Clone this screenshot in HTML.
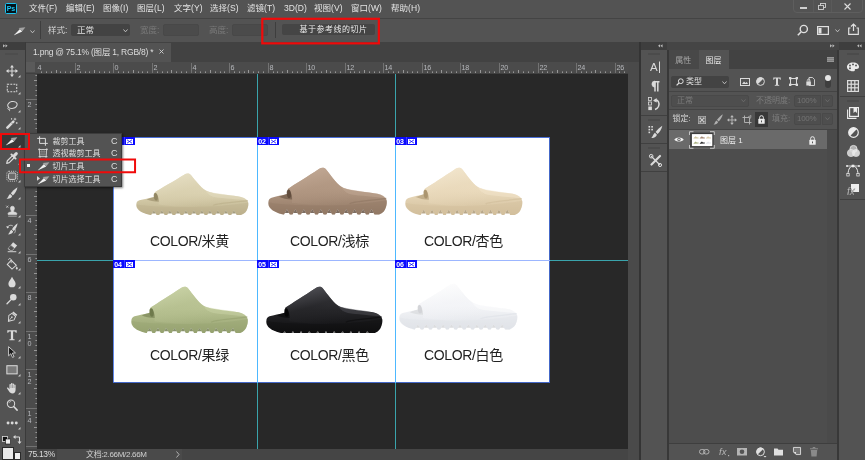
<!DOCTYPE html>
<html lang="zh-CN"><head><meta charset="utf-8"><title>Photoshop</title>
<style>
html,body{margin:0;padding:0}
body{width:865px;height:460px;overflow:hidden;position:relative;background:#535353;font-family:"Liberation Sans","Noto Sans CJK SC",sans-serif;font-size:9px;color:#dcdcdc}
body div,body svg{position:absolute;box-sizing:border-box}
svg{overflow:visible}
svg text{font-family:"Liberation Sans","Noto Sans CJK SC",sans-serif}
</style></head><body><div id="root" style="left:0;top:0;width:865px;height:460px;will-change:transform;">
<div style="left:0px;top:0px;width:865px;height:18px;background:#535353;"></div>
<div style="left:0px;top:18px;width:865px;height:1px;background:#444444;"></div>
<div style="left:5px;top:2.5px;width:11.5px;height:11px;background:#03141c;border:1px solid #1cc4f2;border-radius:1.5px;"></div>
<div style="left:5px;top:2.5px;height:11px;line-height:11px;font-size:7px;color:#1cc4f2;white-space:nowrap;width:11.5px;text-align:center;font-weight:bold;letter-spacing:-0.3px;">Ps</div>
<div style="left:29px;top:2px;height:13px;line-height:13px;font-size:8.5px;color:#e4e4e4;white-space:nowrap;letter-spacing:0.05px;">文件(F)</div>
<div style="left:66px;top:2px;height:13px;line-height:13px;font-size:8.5px;color:#e4e4e4;white-space:nowrap;letter-spacing:0.05px;">编辑(E)</div>
<div style="left:103px;top:2px;height:13px;line-height:13px;font-size:8.5px;color:#e4e4e4;white-space:nowrap;letter-spacing:0.05px;">图像(I)</div>
<div style="left:137px;top:2px;height:13px;line-height:13px;font-size:8.5px;color:#e4e4e4;white-space:nowrap;letter-spacing:0.05px;">图层(L)</div>
<div style="left:174px;top:2px;height:13px;line-height:13px;font-size:8.5px;color:#e4e4e4;white-space:nowrap;letter-spacing:0.05px;">文字(Y)</div>
<div style="left:210px;top:2px;height:13px;line-height:13px;font-size:8.5px;color:#e4e4e4;white-space:nowrap;letter-spacing:0.05px;">选择(S)</div>
<div style="left:247px;top:2px;height:13px;line-height:13px;font-size:8.5px;color:#e4e4e4;white-space:nowrap;letter-spacing:0.05px;">滤镜(T)</div>
<div style="left:284px;top:2px;height:13px;line-height:13px;font-size:8.5px;color:#e4e4e4;white-space:nowrap;letter-spacing:0.05px;">3D(D)</div>
<div style="left:314px;top:2px;height:13px;line-height:13px;font-size:8.5px;color:#e4e4e4;white-space:nowrap;letter-spacing:0.05px;">视图(V)</div>
<div style="left:351px;top:2px;height:13px;line-height:13px;font-size:8.5px;color:#e4e4e4;white-space:nowrap;letter-spacing:0.05px;">窗口(W)</div>
<div style="left:391px;top:2px;height:13px;line-height:13px;font-size:8.5px;color:#e4e4e4;white-space:nowrap;letter-spacing:0.05px;">帮助(H)</div>
<div style="left:793px;top:-1px;width:70px;height:13.5px;border:1px solid #5e5e5e;border-radius:0 0 4px 4px;"></div>
<div style="left:812.5px;top:0px;width:1px;height:11.5px;background:#5a5a5a;"></div>
<div style="left:831px;top:0px;width:1px;height:11.5px;background:#5a5a5a;"></div>
<div style="left:800px;top:7px;width:7px;height:2px;background:#cfcfcf;"></div>
<svg style="left:818px;top:3px;" width="8" height="7" viewBox="0 0 8 7"><rect x="2.5" y="0.5" width="5" height="4" fill="none" stroke="#cfcfcf" stroke-width="0.9"/><rect x="0.5" y="2.5" width="5" height="4" fill="#535353" stroke="#cfcfcf" stroke-width="0.9"/></svg>
<svg style="left:844px;top:2.5px;" width="7" height="7" viewBox="0 0 7 7"><path d="M0.5,0.5 L6.5,6.5 M6.5,0.5 L0.5,6.5" stroke="#dcdcdc" stroke-width="1.1"/></svg>
<div style="left:0px;top:19px;width:865px;height:22px;background:#535353;"></div>
<div style="left:0px;top:41px;width:865px;height:1px;background:#535353;"></div>
<svg style="left:13px;top:27px;" width="13" height="9" viewBox="0 0 13 9"><path d="M0.6,8.5 L7,2 L9.2,4.6 Z" fill="#f0f0f0"/><path d="M5.6,0.9 L12.4,0.3 L9.3,4.2 Z" fill="#a4a4a4"/></svg>
<svg style="left:30px;top:30px;" width="5" height="4" viewBox="0 0 5 4"><path d="M0.5,0.5 L2.5,2.8 L4.5,0.5" fill="none" stroke="#c8c8c8" stroke-width="0.9"/></svg>
<div style="left:40px;top:21px;width:1px;height:18px;background:#3e3e3e;"></div>
<div style="left:48px;top:23px;height:14px;line-height:14px;font-size:8.5px;color:#d6d6d6;white-space:nowrap;">样式:</div>
<div style="left:71px;top:24px;width:59px;height:12px;background:#434343;border-radius:2px;"></div>
<div style="left:77px;top:24px;height:12px;line-height:12px;font-size:8.5px;color:#e0e0e0;white-space:nowrap;">正常</div>
<svg style="left:123px;top:29px;" width="5" height="4" viewBox="0 0 5 4"><path d="M0.5,0.5 L2.5,2.8 L4.5,0.5" fill="none" stroke="#c8c8c8" stroke-width="0.9"/></svg>
<div style="left:140px;top:23px;height:14px;line-height:14px;font-size:8.5px;color:#7a7a7a;white-space:nowrap;">宽度:</div>
<div style="left:163px;top:24px;width:36px;height:12px;background:#4b4b4b;border:1px solid #484848;border-radius:2px;"></div>
<div style="left:209px;top:23px;height:14px;line-height:14px;font-size:8.5px;color:#7a7a7a;white-space:nowrap;">高度:</div>
<div style="left:232px;top:24px;width:36px;height:12px;background:#4b4b4b;border:1px solid #484848;border-radius:2px;"></div>
<div style="left:275px;top:22px;width:1px;height:16px;background:#3e3e3e;"></div>
<div style="left:282px;top:24px;width:93px;height:11px;background:#454545;border-radius:2px;"></div>
<div style="left:299.5px;top:24px;height:11px;line-height:11px;font-size:8px;color:#ececec;white-space:nowrap;letter-spacing:0.5px;">基于参考线的切片</div>
<svg style="left:797px;top:24px;" width="12" height="12" viewBox="0 0 12 12"><circle cx="6.8" cy="5" r="3.6" fill="none" stroke="#e0e0e0" stroke-width="1.4"/><path d="M4,8 L0.8,11.2" stroke="#e0e0e0" stroke-width="1.6"/></svg>
<svg style="left:817px;top:26px;" width="12" height="9" viewBox="0 0 12 9"><rect x="0.6" y="0.6" width="10.8" height="7.8" fill="none" stroke="#e0e0e0" stroke-width="1.2"/><rect x="1.5" y="2" width="3" height="5.5" fill="#e0e0e0"/></svg>
<svg style="left:835px;top:29px;" width="5" height="4" viewBox="0 0 5 4"><path d="M0.5,0.5 L2.5,2.8 L4.5,0.5" fill="none" stroke="#c8c8c8" stroke-width="0.9"/></svg>
<svg style="left:848px;top:23px;" width="11" height="12" viewBox="0 0 11 12"><path d="M2.5,5 H0.7 V11.3 H10.3 V5 H8.5" fill="none" stroke="#e0e0e0" stroke-width="1.2"/><path d="M5.5,8 V1.2 M3,3.5 L5.5,1 L8,3.5" fill="none" stroke="#e0e0e0" stroke-width="1.2"/></svg>
<div style="left:0px;top:42px;width:865px;height:20px;background:#424242;"></div>
<div style="left:0px;top:42px;width:25px;height:8px;background:#3e3e3e;"></div>
<svg style="left:2.5px;top:44.4px;" width="4.6" height="3.6" viewBox="0 0 5.5 4.4"><path d="M0,0.2 L2.5,2.2 L0,4.2 Z M3,0.2 L5.5,2.2 L3,4.2 Z" fill="#bdbdbd"/></svg>
<div style="left:26px;top:43px;width:145px;height:19px;background:#535353;"></div>
<div style="left:33px;top:46px;height:13px;line-height:13px;font-size:8.5px;color:#dedede;white-space:nowrap;letter-spacing:-0.22px;">1.png @ 75.1% (图层 1, RGB/8) *</div>
<svg style="left:159px;top:48.7px;" width="5" height="5" viewBox="0 0 5 5"><path d="M0.5,0.5 L4.5,4.5 M4.5,0.5 L0.5,4.5" stroke="#d0d0d0" stroke-width="0.9"/></svg>
<svg style="left:260px;top:16px;" width="122" height="30" viewBox="0 0 122 30"><rect x="2.3" y="2.8" width="116.55" height="24.55" fill="none" stroke="#f00a0a" stroke-width="2.2"/></svg>
<div style="left:0px;top:50px;width:25px;height:410px;background:#535353;"></div>
<div style="left:25px;top:42px;width:1px;height:418px;background:#3a3a3a;"></div>
<div style="left:5px;top:53px;width:13px;height:2px;background:#4d4d4d;"></div>
<div style="left:2px;top:135px;width:26px;height:14px;background:#383838;"></div>
<svg style="left:5.7px;top:64.7px;" width="12" height="12" viewBox="0 0 14 14"><path d="M7,1 V13 M1,7 H13" stroke="#dadada" stroke-width="1.2"/><path d="M7,0 L9.3,3 H4.7 Z M7,14 L9.3,11 H4.7 Z M0,7 L3,4.7 V9.3 Z M14,7 L11,4.7 V9.3 Z" fill="#dadada"/></svg>
<svg style="left:18px;top:75px;" width="2.5" height="2.5" viewBox="0 0 2.5 2.5"><path d="M2.5,0 V2.5 H0 Z" fill="#c8c8c8"/></svg>
<svg style="left:5.7px;top:81.7px;" width="12" height="12" viewBox="0 0 14 14"><rect x="1.5" y="2.5" width="11" height="9" fill="none" stroke="#dadada" stroke-width="1.2" stroke-dasharray="2.2 1.4"/></svg>
<svg style="left:18px;top:92px;" width="2.5" height="2.5" viewBox="0 0 2.5 2.5"><path d="M2.5,0 V2.5 H0 Z" fill="#c8c8c8"/></svg>
<svg style="left:5.7px;top:99.7px;" width="12" height="12" viewBox="0 0 14 14"><ellipse cx="7.5" cy="5.8" rx="5.6" ry="4" fill="none" stroke="#dadada" stroke-width="1.2" transform="rotate(-12 7.5 5.8)"/><path d="M3.2,8.5 C1.5,9.5 2,11.5 3.8,11 C5,10.6 4.5,12.5 3.5,13" fill="none" stroke="#dadada" stroke-width="1"/></svg>
<svg style="left:18px;top:110px;" width="2.5" height="2.5" viewBox="0 0 2.5 2.5"><path d="M2.5,0 V2.5 H0 Z" fill="#c8c8c8"/></svg>
<svg style="left:5.7px;top:116.7px;" width="12" height="12" viewBox="0 0 14 14"><path d="M1.6,12.4 L8.6,5.4" stroke="#dadada" stroke-width="3" stroke-linecap="round"/><path d="M6.2,6.6 L7.6,8" stroke="#535353" stroke-width="0.8"/><path d="M10.5,1 V4 M9,2.5 H12 M12.5,6 V8 M11.5,7 H13.5 M6.5,1.5 V3 M5.8,2.2 H7.2" stroke="#dadada" stroke-width="0.9"/></svg>
<svg style="left:18px;top:127px;" width="2.5" height="2.5" viewBox="0 0 2.5 2.5"><path d="M2.5,0 V2.5 H0 Z" fill="#c8c8c8"/></svg>
<svg style="left:5.7px;top:134.7px;" width="12" height="12" viewBox="0 0 14 14"></svg>
<svg style="left:18px;top:145px;" width="2.5" height="2.5" viewBox="0 0 2.5 2.5"><path d="M2.5,0 V2.5 H0 Z" fill="#c8c8c8"/></svg>
<svg style="left:5.7px;top:151.7px;" width="12" height="12" viewBox="0 0 14 14"><path d="M0.8,13.2 L1.6,10.2 L7.6,4.2 L9.8,6.4 L3.8,12.4 Z" fill="none" stroke="#dadada" stroke-width="1.4" stroke-linejoin="round"/><path d="M6.3,2.8 L11.2,7.7" stroke="#dadada" stroke-width="2.2" stroke-linecap="round"/><path d="M9.3,4.7 L12,2" stroke="#dadada" stroke-width="3.6" stroke-linecap="round"/></svg>
<svg style="left:18px;top:162px;" width="2.5" height="2.5" viewBox="0 0 2.5 2.5"><path d="M2.5,0 V2.5 H0 Z" fill="#c8c8c8"/></svg>
<svg style="left:5.7px;top:169.7px;" width="12" height="12" viewBox="0 0 14 14"><rect x="3" y="3.5" width="8.5" height="7.5" rx="1.6" fill="#6a6a6a" stroke="#dadada" stroke-width="1.1"/><rect x="1" y="1.5" width="12.5" height="11.5" rx="2.5" fill="none" stroke="#dadada" stroke-width="1" stroke-dasharray="1.2 1.2"/></svg>
<svg style="left:18px;top:180px;" width="2.5" height="2.5" viewBox="0 0 2.5 2.5"><path d="M2.5,0 V2.5 H0 Z" fill="#c8c8c8"/></svg>
<svg style="left:5.7px;top:186.7px;" width="12" height="12" viewBox="0 0 14 14"><path d="M13.4,0.3 C10,2.4 7,5.4 5.6,7.3 L8,9.8 C10.2,8 12.8,4 13.4,0.3 Z" fill="#dadada"/><path d="M4.8,8.1 L7.2,10.6 C6.6,13 3.5,14.2 0.6,13.6 C2.8,12.4 2.6,9.5 4.8,8.1 Z" fill="#dadada"/></svg>
<svg style="left:18px;top:197px;" width="2.5" height="2.5" viewBox="0 0 2.5 2.5"><path d="M2.5,0 V2.5 H0 Z" fill="#c8c8c8"/></svg>
<svg style="left:5.7px;top:204.7px;" width="12" height="12" viewBox="0 0 14 14"><path d="M2.5,13 H12.5 M2.5,11 H12.5 V9.5 C12.5,8.5 9,8.5 8.8,7.5 C8.6,6.5 9.8,5.5 9.8,3.8 A2.3,2.3 0 0 0 5.2,3.8 C5.2,5.5 6.4,6.5 6.2,7.5 C6,8.5 2.5,8.5 2.5,9.5 Z" fill="#dadada" stroke="#dadada" stroke-width="0.8"/><path d="M0.3,0.8 L2.7,3.2 M2.7,0.8 L0.3,3.2" stroke="#dadada" stroke-width="0.8"/></svg>
<svg style="left:18px;top:215px;" width="2.5" height="2.5" viewBox="0 0 2.5 2.5"><path d="M2.5,0 V2.5 H0 Z" fill="#c8c8c8"/></svg>
<svg style="left:5.7px;top:222.7px;" width="12" height="12" viewBox="0 0 14 14"><path d="M13.6,0.4 C11,2.4 8.6,5 7,7.2 L9,9.3 C11,7.5 13,4 13.6,0.4 Z" fill="#dadada"/><path d="M6.3,8 L8.3,10 C7.8,12.3 5,13.6 2.4,13.2 C4.3,12 4.2,9.4 6.3,8 Z" fill="#dadada"/><path d="M1.5,5.5 C2.5,2.5 6,2 8,3.5" fill="none" stroke="#dadada" stroke-width="1"/><path d="M0.3,3.5 L1.5,6.3 L3.8,4.6 Z" fill="#dadada"/><path d="M10.5,7 C11.3,9 10.8,10.8 9.5,12" fill="none" stroke="#dadada" stroke-width="0.8"/></svg>
<svg style="left:18px;top:233px;" width="2.5" height="2.5" viewBox="0 0 2.5 2.5"><path d="M2.5,0 V2.5 H0 Z" fill="#c8c8c8"/></svg>
<svg style="left:5.7px;top:240.7px;" width="12" height="12" viewBox="0 0 14 14"><path d="M8.3,1.5 L13,5.3 L7.8,11 H4.5 L2,9 Z" fill="#dadada"/><path d="M5.2,5 L9.8,8.8" stroke="#535353" stroke-width="0.9"/><path d="M2.6,8.6 L5,10.5 L7.6,10.5 L9.3,8.5 L5.5,5.4 Z" fill="#535353" stroke="#dadada" stroke-width="0.01"/><path d="M2,12.5 H12" stroke="#dadada" stroke-width="1.1"/></svg>
<svg style="left:18px;top:251px;" width="2.5" height="2.5" viewBox="0 0 2.5 2.5"><path d="M2.5,0 V2.5 H0 Z" fill="#c8c8c8"/></svg>
<svg style="left:5.7px;top:257.7px;" width="12" height="12" viewBox="0 0 14 14"><path d="M6,2.5 L12,8.5 L7,13 L1.5,7.5 Z" fill="none" stroke="#dadada" stroke-width="1.2"/><path d="M3,2 C3,0 6,0 6,2.5 V6" fill="none" stroke="#dadada" stroke-width="1"/><path d="M6,2.5 L12,8.5 H3 Z" fill="#dadada" opacity="0.0"/><path d="M12.6,9.5 C13.6,11 13.8,12 13.8,12.3 A1.2,1.2 0 0 1 11.4,12.3 C11.4,12 11.6,11 12.6,9.5 Z" fill="#dadada"/></svg>
<svg style="left:18px;top:268px;" width="2.5" height="2.5" viewBox="0 0 2.5 2.5"><path d="M2.5,0 V2.5 H0 Z" fill="#c8c8c8"/></svg>
<svg style="left:5.7px;top:275.7px;" width="12" height="12" viewBox="0 0 14 14"><path d="M7,0.8 C8.5,4 11.2,6.3 11.2,9 A4.2,4.2 0 0 1 2.8,9 C2.8,6.3 5.5,4 7,0.8 Z" fill="#dadada"/></svg>
<svg style="left:18px;top:286px;" width="2.5" height="2.5" viewBox="0 0 2.5 2.5"><path d="M2.5,0 V2.5 H0 Z" fill="#c8c8c8"/></svg>
<svg style="left:5.7px;top:292.7px;" width="12" height="12" viewBox="0 0 14 14"><circle cx="8.5" cy="5" r="3.8" fill="#dadada"/><path d="M5.6,8 L1.2,12.6" stroke="#dadada" stroke-width="1.6" stroke-linecap="round"/></svg>
<svg style="left:18px;top:303px;" width="2.5" height="2.5" viewBox="0 0 2.5 2.5"><path d="M2.5,0 V2.5 H0 Z" fill="#c8c8c8"/></svg>
<svg style="left:5.7px;top:310.7px;" width="12" height="12" viewBox="0 0 14 14"><g transform="rotate(40 7 7)"><path d="M4,1 H10 V3 H4 Z" fill="#dadada"/><path d="M4.2,3.8 H9.8 L11,8 L7,13.5 L3,8 Z" fill="none" stroke="#dadada" stroke-width="1.1"/><path d="M7,13 V8" stroke="#dadada" stroke-width="0.9"/><circle cx="7" cy="7.3" r="1" fill="#dadada"/></g></svg>
<svg style="left:18px;top:321px;" width="2.5" height="2.5" viewBox="0 0 2.5 2.5"><path d="M2.5,0 V2.5 H0 Z" fill="#c8c8c8"/></svg>
<svg style="left:5.7px;top:328.7px;" width="12" height="12" viewBox="0 0 14 14"><path d="M1.5,1.5 H12.5 V4.5 H11.3 C11.2,3.4 10.8,3 9.5,3 H8.3 V11 C8.3,11.8 8.8,12 10,12 V13 H4 V12 C5.2,12 5.7,11.8 5.7,11 V3 H4.5 C3.2,3 2.8,3.4 2.7,4.5 H1.5 Z" fill="#dadada"/></svg>
<svg style="left:18px;top:339px;" width="2.5" height="2.5" viewBox="0 0 2.5 2.5"><path d="M2.5,0 V2.5 H0 Z" fill="#c8c8c8"/></svg>
<svg style="left:5.7px;top:345.7px;" width="12" height="12" viewBox="0 0 14 14"><path d="M3,0.8 V11.5 L5.6,9 L7.6,13.3 L9.4,12.5 L7.4,8.3 L11,8 Z" fill="#1c1c1c" stroke="#dadada" stroke-width="1"/></svg>
<svg style="left:18px;top:356px;" width="2.5" height="2.5" viewBox="0 0 2.5 2.5"><path d="M2.5,0 V2.5 H0 Z" fill="#c8c8c8"/></svg>
<svg style="left:5.7px;top:363.7px;" width="12" height="12" viewBox="0 0 14 14"><rect x="1" y="2" width="12" height="9.5" fill="#7a7a7a" stroke="#dadada" stroke-width="1.2"/></svg>
<svg style="left:18px;top:374px;" width="2.5" height="2.5" viewBox="0 0 2.5 2.5"><path d="M2.5,0 V2.5 H0 Z" fill="#c8c8c8"/></svg>
<svg style="left:5.7px;top:381.7px;" width="12" height="12" viewBox="0 0 14 14"><path d="M4,8.5 V3.2 A0.9,0.9 0 0 1 5.8,3.2 V2 A0.9,0.9 0 0 1 7.6,2 V2.6 A0.9,0.9 0 0 1 9.4,2.6 V3.8 A0.9,0.9 0 0 1 11.2,3.8 V9 C11.2,11.5 9.8,13.3 7.5,13.3 C5.5,13.3 4.5,12.3 3.5,10.8 L1.3,7.6 C0.8,6.6 2,6 2.7,6.8 Z" fill="#dadada"/><path d="M5.8,3.2 V7 M7.6,2.6 V7 M9.4,3.8 V7" stroke="#535353" stroke-width="0.5"/></svg>
<svg style="left:18px;top:392px;" width="2.5" height="2.5" viewBox="0 0 2.5 2.5"><path d="M2.5,0 V2.5 H0 Z" fill="#c8c8c8"/></svg>
<svg style="left:5.7px;top:398.7px;" width="12" height="12" viewBox="0 0 14 14"><circle cx="5.8" cy="5.5" r="4.3" fill="none" stroke="#dadada" stroke-width="1.2"/><path d="M9,8.8 L13,13" stroke="#dadada" stroke-width="1.8" stroke-linecap="round"/><path d="M3.3,4.8 A2.8,2.8 0 0 1 6,2.8" fill="none" stroke="#dadada" stroke-width="0.7"/></svg>
<svg style="left:5.7px;top:416.7px;" width="12" height="12" viewBox="0 0 14 14"><circle cx="2.4" cy="7" r="1.7" fill="#dadada"/><circle cx="7.2" cy="7" r="1.7" fill="#dadada"/><circle cx="12" cy="7" r="1.7" fill="#dadada"/></svg>
<svg style="left:18px;top:427px;" width="2.5" height="2.5" viewBox="0 0 2.5 2.5"><path d="M2.5,0 V2.5 H0 Z" fill="#c8c8c8"/></svg>
<svg style="left:5px;top:137px;" width="13" height="9" viewBox="0 0 13 9"><path d="M0.6,8.5 L7,2 L9.2,4.6 Z" fill="#f0f0f0"/><path d="M5.6,0.9 L12.4,0.3 L9.3,4.2 Z" fill="#a4a4a4"/></svg>
<svg style="left:2px;top:436px;" width="9" height="8" viewBox="0 0 9 8"><rect x="0.5" y="0.5" width="5" height="5" fill="#111" stroke="#ddd" stroke-width="0.8"/><rect x="3.5" y="3" width="5" height="5" fill="#eee" stroke="#111" stroke-width="0.6"/></svg>
<svg style="left:13px;top:435px;" width="9" height="9" viewBox="0 0 9 9"><path d="M2,2 H6.5 V7" fill="none" stroke="#dadada" stroke-width="1"/><path d="M0,2 L2.5,0 V4 Z M6.5,9 L4.5,6.5 H8.5 Z" fill="#dadada"/></svg>
<div style="left:14px;top:452px;width:7px;height:8px;background:#f0f0f0;border:1px solid #2a2a2a;"></div>
<div style="left:2px;top:447px;width:12px;height:13px;background:#eaeaea;border:1px solid #2a2a2a;"></div>
<div style="left:26px;top:62px;width:602px;height:12px;background:#4b4b4b;"></div>
<div style="left:26px;top:74px;width:11px;height:375px;background:#4b4b4b;"></div>
<div style="left:26px;top:62px;width:9px;height:10px;background:#5a5a5a;"></div>
<div style="left:26px;top:73px;width:602px;height:1px;background:#404040;"></div>
<svg style="left:37px;top:62px;overflow:hidden;" width="591" height="11" viewBox="0 0 591 11"><text x="0.6" y="7.6" font-size="7.2" letter-spacing="-0.3" fill="#b6b8bc">4</text><text x="39.6" y="7.6" font-size="7.2" letter-spacing="-0.3" fill="#b6b8bc">2</text><text x="77.6" y="7.6" font-size="7.2" letter-spacing="-0.3" fill="#b6b8bc">0</text><text x="116.6" y="7.6" font-size="7.2" letter-spacing="-0.3" fill="#b6b8bc">2</text><text x="155.6" y="7.6" font-size="7.2" letter-spacing="-0.3" fill="#b6b8bc">4</text><text x="193.6" y="7.6" font-size="7.2" letter-spacing="-0.3" fill="#b6b8bc">6</text><text x="232.6" y="7.6" font-size="7.2" letter-spacing="-0.3" fill="#b6b8bc">8</text><text x="270.6" y="7.6" font-size="7.2" letter-spacing="-0.3" fill="#b6b8bc">10</text><text x="309.6" y="7.6" font-size="7.2" letter-spacing="-0.3" fill="#b6b8bc">12</text><text x="347.6" y="7.6" font-size="7.2" letter-spacing="-0.3" fill="#b6b8bc">14</text><text x="386.6" y="7.6" font-size="7.2" letter-spacing="-0.3" fill="#b6b8bc">16</text><text x="424.6" y="7.6" font-size="7.2" letter-spacing="-0.3" fill="#b6b8bc">18</text><text x="463.6" y="7.6" font-size="7.2" letter-spacing="-0.3" fill="#b6b8bc">20</text><text x="502.6" y="7.6" font-size="7.2" letter-spacing="-0.3" fill="#b6b8bc">22</text><text x="540.6" y="7.6" font-size="7.2" letter-spacing="-0.3" fill="#b6b8bc">24</text><text x="579.6" y="7.6" font-size="7.2" letter-spacing="-0.3" fill="#b6b8bc">26</text><path d="M38.5,1 V11 M76.5,1 V11 M115.5,1 V11 M154.5,1 V11 M192.5,1 V11 M231.5,1 V11 M269.5,1 V11 M308.5,1 V11 M346.5,1 V11 M385.5,1 V11 M423.5,1 V11 M462.5,1 V11 M501.5,1 V11 M539.5,1 V11 M578.5,1 V11 " stroke="#727272" stroke-width="1" fill="none"/><path d="M19.5,8 V11 M57.5,8 V11 M96.5,8 V11 M134.5,8 V11 M173.5,8 V11 M211.5,8 V11 M250.5,8 V11 M289.5,8 V11 M327.5,8 V11 M366.5,8 V11 M404.5,8 V11 M443.5,8 V11 M481.5,8 V11 M520.5,8 V11 M558.5,8 V11 " stroke="#969696" stroke-width="1" fill="none"/><path d="M4.5,9.4 V11 M9.5,9.4 V11 M14.5,9.4 V11 M23.5,9.4 V11 M28.5,9.4 V11 M33.5,9.4 V11 M43.5,9.4 V11 M48.5,9.4 V11 M52.5,9.4 V11 M62.5,9.4 V11 M67.5,9.4 V11 M72.5,9.4 V11 M81.5,9.4 V11 M86.5,9.4 V11 M91.5,9.4 V11 M101.5,9.4 V11 M105.5,9.4 V11 M110.5,9.4 V11 M120.5,9.4 V11 M125.5,9.4 V11 M130.5,9.4 V11 M139.5,9.4 V11 M144.5,9.4 V11 M149.5,9.4 V11 M158.5,9.4 V11 M163.5,9.4 V11 M168.5,9.4 V11 M178.5,9.4 V11 M183.5,9.4 V11 M187.5,9.4 V11 M197.5,9.4 V11 M202.5,9.4 V11 M207.5,9.4 V11 M216.5,9.4 V11 M221.5,9.4 V11 M226.5,9.4 V11 M236.5,9.4 V11 M240.5,9.4 V11 M245.5,9.4 V11 M255.5,9.4 V11 M260.5,9.4 V11 M264.5,9.4 V11 M274.5,9.4 V11 M279.5,9.4 V11 M284.5,9.4 V11 M293.5,9.4 V11 M298.5,9.4 V11 M303.5,9.4 V11 M313.5,9.4 V11 M317.5,9.4 V11 M322.5,9.4 V11 M332.5,9.4 V11 M337.5,9.4 V11 M342.5,9.4 V11 M351.5,9.4 V11 M356.5,9.4 V11 M361.5,9.4 V11 M370.5,9.4 V11 M375.5,9.4 V11 M380.5,9.4 V11 M390.5,9.4 V11 M395.5,9.4 V11 M399.5,9.4 V11 M409.5,9.4 V11 M414.5,9.4 V11 M419.5,9.4 V11 M428.5,9.4 V11 M433.5,9.4 V11 M438.5,9.4 V11 M448.5,9.4 V11 M452.5,9.4 V11 M457.5,9.4 V11 M467.5,9.4 V11 M472.5,9.4 V11 M476.5,9.4 V11 M486.5,9.4 V11 M491.5,9.4 V11 M496.5,9.4 V11 M505.5,9.4 V11 M510.5,9.4 V11 M515.5,9.4 V11 M525.5,9.4 V11 M529.5,9.4 V11 M534.5,9.4 V11 M544.5,9.4 V11 M549.5,9.4 V11 M554.5,9.4 V11 M563.5,9.4 V11 M568.5,9.4 V11 M573.5,9.4 V11 M582.5,9.4 V11 M587.5,9.4 V11 " stroke="#969696" stroke-width="1" fill="none"/></svg>
<svg style="left:26px;top:74px;overflow:hidden;" width="11" height="375" viewBox="0 0 11 375"><text x="1.6" y="33.2" font-size="7.2" fill="#b6b8bc">2</text><text x="1.6" y="72.2" font-size="7.2" fill="#b6b8bc">0</text><text x="1.6" y="110.2" font-size="7.2" fill="#b6b8bc">2</text><text x="1.6" y="149.2" font-size="7.2" fill="#b6b8bc">4</text><text x="1.6" y="188.2" font-size="7.2" fill="#b6b8bc">6</text><text x="1.6" y="226.2" font-size="7.2" fill="#b6b8bc">8</text><text x="1.6" y="265.2" font-size="7.2" fill="#b6b8bc">1</text><text x="1.6" y="271.8" font-size="7.2" fill="#b6b8bc">0</text><text x="1.6" y="303.2" font-size="7.2" fill="#b6b8bc">1</text><text x="1.6" y="309.8" font-size="7.2" fill="#b6b8bc">2</text><text x="1.6" y="342.2" font-size="7.2" fill="#b6b8bc">1</text><text x="1.6" y="348.8" font-size="7.2" fill="#b6b8bc">4</text><text x="1.6" y="380.2" font-size="7.2" fill="#b6b8bc">1</text><text x="1.6" y="386.8" font-size="7.2" fill="#b6b8bc">6</text><path d="M0,25.5 H11 M0,64.5 H11 M0,102.5 H11 M0,141.5 H11 M0,180.5 H11 M0,218.5 H11 M0,257.5 H11 M0,295.5 H11 M0,334.5 H11 M0,372.5 H11 " stroke="#727272" stroke-width="1" fill="none"/><path d="M8,6.5 H11 M8,45.5 H11 M8,83.5 H11 M8,122.5 H11 M8,160.5 H11 M8,199.5 H11 M8,237.5 H11 M8,276.5 H11 M8,314.5 H11 M8,353.5 H11 " stroke="#969696" stroke-width="1" fill="none"/><path d="M9.4,1.5 H11 M9.4,11.5 H11 M9.4,16.5 H11 M9.4,21.5 H11 M9.4,30.5 H11 M9.4,35.5 H11 M9.4,40.5 H11 M9.4,49.5 H11 M9.4,54.5 H11 M9.4,59.5 H11 M9.4,69.5 H11 M9.4,74.5 H11 M9.4,78.5 H11 M9.4,88.5 H11 M9.4,93.5 H11 M9.4,98.5 H11 M9.4,107.5 H11 M9.4,112.5 H11 M9.4,117.5 H11 M9.4,127.5 H11 M9.4,131.5 H11 M9.4,136.5 H11 M9.4,146.5 H11 M9.4,151.5 H11 M9.4,155.5 H11 M9.4,165.5 H11 M9.4,170.5 H11 M9.4,175.5 H11 M9.4,184.5 H11 M9.4,189.5 H11 M9.4,194.5 H11 M9.4,204.5 H11 M9.4,208.5 H11 M9.4,213.5 H11 M9.4,223.5 H11 M9.4,228.5 H11 M9.4,233.5 H11 M9.4,242.5 H11 M9.4,247.5 H11 M9.4,252.5 H11 M9.4,261.5 H11 M9.4,266.5 H11 M9.4,271.5 H11 M9.4,281.5 H11 M9.4,286.5 H11 M9.4,290.5 H11 M9.4,300.5 H11 M9.4,305.5 H11 M9.4,310.5 H11 M9.4,319.5 H11 M9.4,324.5 H11 M9.4,329.5 H11 M9.4,339.5 H11 M9.4,343.5 H11 M9.4,348.5 H11 M9.4,358.5 H11 M9.4,363.5 H11 M9.4,367.5 H11 " stroke="#969696" stroke-width="1" fill="none"/></svg>
<div style="left:37px;top:74px;width:591px;height:375px;background:#282828;"></div>
<div style="left:628px;top:62px;width:11px;height:398px;background:#4a4a4a;"></div>
<div style="left:639px;top:42px;width:2px;height:418px;background:#343434;"></div>
<div style="left:26px;top:449px;width:602px;height:11px;background:#4a4a4a;"></div>
<div style="left:26px;top:449px;width:31px;height:11px;background:#434343;"></div>
<div style="left:28px;top:449px;height:11px;line-height:11px;font-size:8.5px;color:#dcdcdc;white-space:nowrap;letter-spacing:-0.3px;">75.13%</div>
<div style="left:86px;top:449px;height:11px;line-height:11px;font-size:8px;color:#d0d0d0;white-space:nowrap;letter-spacing:-0.3px;">文档:2.66M/2.66M</div>
<svg style="left:176px;top:451px;" width="4" height="7" viewBox="0 0 4 7"><path d="M0.5,0.5 L3,3.5 L0.5,6.5" fill="none" stroke="#bdbdbd" stroke-width="0.9"/></svg>
<div style="left:182px;top:449px;width:446px;height:11px;background:#454545;"></div>
<div style="left:113px;top:137px;width:437px;height:246px;background:#ffffff;"></div>
<svg style="left:135.5px;top:173px;filter:blur(0.35px);" width="113" height="42.5" viewBox="0 0 120 48.4" preserveAspectRatio="none"><defs><linearGradient id="g0" x1="0" y1="0" x2="0" y2="1"><stop offset="0" stop-color="#e7e0c6"/><stop offset="0.5" stop-color="#d9d0af"/><stop offset="1" stop-color="#bcb08b"/></linearGradient><linearGradient id="s0" x1="0.25" y1="0" x2="0.75" y2="1"><stop offset="0" stop-color="#e7e0c6" stop-opacity="0.95"/><stop offset="0.5" stop-color="#d9d0af" stop-opacity="0.6"/><stop offset="1" stop-color="#d9d0af" stop-opacity="0"/></linearGradient></defs><path d="M0.4,36 C0.3,33.4 1.3,31.6 3.6,30.9 C8,29.7 14,28.4 19.2,27.2 L20,22 C26,18 40,9.5 51.5,1.8 C53.5,0.3 56.5,0.3 58,2 C61,5.5 66,13 71.7,18.3 C75,21 78,22 82,22.8 C90,24.2 100,25.3 108,26.5 C113,27.3 117,29 118.8,32.5 C119.6,34.5 119.4,38 118.3,40.8 C117.3,44 115.5,46.4 111.5,47.8 L15.5,47.8 C10,46.8 2.6,44 0.7,39 C0.5,38 0.4,37 0.4,36 Z" fill="url(#g0)"/><path d="M0.5,35.5 C6,37.5 40,39.5 70,38.5 C90,37.8 108,35.5 119.3,33.5 C119.6,36 119.2,39 118.3,40.8 C117.3,44 115.5,46.4 111.5,47.8 L15.5,47.8 C11,46.6 4,43.6 0.8,38.3 C0.4,37.3 0.4,36.3 0.5,35.5 Z" fill="#bcb08b" opacity="0.4"/><path d="M15.7,48.6 L18.5,43.2 Q19.0,42.4 19.5,43.2 L22.3,48.6 Z M24.2,48.6 L27.0,43.2 Q27.5,42.4 28.0,43.2 L30.8,48.6 Z M32.7,48.6 L35.5,43.2 Q36.0,42.4 36.5,43.2 L39.3,48.6 Z M41.2,48.6 L44.0,43.2 Q44.5,42.4 45.0,43.2 L47.8,48.6 Z M49.7,48.6 L52.5,43.2 Q53.0,42.4 53.5,43.2 L56.3,48.6 Z M58.2,48.6 L61.0,43.2 Q61.5,42.4 62.0,43.2 L64.8,48.6 Z M66.7,48.6 L69.5,43.2 Q70.0,42.4 70.5,43.2 L73.3,48.6 Z M75.2,48.6 L78.0,43.2 Q78.5,42.4 79.0,43.2 L81.8,48.6 Z M83.7,48.6 L86.5,43.2 Q87.0,42.4 87.5,43.2 L90.3,48.6 Z M92.2,48.6 L95.0,43.2 Q95.5,42.4 96.0,43.2 L98.8,48.6 Z M100.7,48.6 L103.5,43.2 Q104.0,42.4 104.5,43.2 L107.3,48.6 Z " fill="#ffffff"/><path d="M16.9,46.2 L18.5,43.2 Q19.0,42.4 19.5,43.2 L21.1,46.2 Z M25.4,46.2 L27.0,43.2 Q27.5,42.4 28.0,43.2 L29.6,46.2 Z M33.9,46.2 L35.5,43.2 Q36.0,42.4 36.5,43.2 L38.1,46.2 Z M42.4,46.2 L44.0,43.2 Q44.5,42.4 45.0,43.2 L46.6,46.2 Z M50.9,46.2 L52.5,43.2 Q53.0,42.4 53.5,43.2 L55.1,46.2 Z M59.4,46.2 L61.0,43.2 Q61.5,42.4 62.0,43.2 L63.6,46.2 Z M67.9,46.2 L69.5,43.2 Q70.0,42.4 70.5,43.2 L72.1,46.2 Z M76.4,46.2 L78.0,43.2 Q78.5,42.4 79.0,43.2 L80.6,46.2 Z M84.9,46.2 L86.5,43.2 Q87.0,42.4 87.5,43.2 L89.1,46.2 Z M93.4,46.2 L95.0,43.2 Q95.5,42.4 96.0,43.2 L97.6,46.2 Z M101.9,46.2 L103.5,43.2 Q104.0,42.4 104.5,43.2 L106.1,46.2 Z " fill="#8f845f" opacity="0.8"/><path d="M20,22 C26,18 40,9.5 51.5,1.8 C53.5,0.3 56.5,0.3 58,2 C61,5.5 66,13 71.7,18.3 C75,21 78,22 82,22.8 C84,28 82,34 78,38 C60,39 40,38.5 24,36 C25,31 23,25.5 20,22 Z" fill="url(#s0)"/><path d="M11,30 C14,28.7 17,27.8 19.2,27.2 L20,22.4 C23,24.4 24.6,28.4 24.2,32.6 C19,32.6 14.5,31.6 11,30 Z" fill="#8f845f" opacity="0.55"/><ellipse cx="21" cy="27" rx="2.1" ry="4.3" transform="rotate(-8 21 27)" fill="#8f845f" opacity="0.9"/><path d="M74,20.5 C80,22.6 96,24.4 108,26.4 C113,27.2 116.5,28.6 118.3,31.2 C108,30 92,28.8 84,27.6 C80,26.8 76.5,24.5 74,20.5 Z" fill="#e7e0c6" opacity="0.45"/><path d="M82,37 C84,34.5 100,34 118.8,31.5" fill="none" stroke="#bcb08b" stroke-width="1.3" opacity="0.7"/></svg>
<svg style="left:267.5px;top:167.3px;filter:blur(0.35px);" width="119.5" height="48.2" viewBox="0 0 120 48.4" preserveAspectRatio="none"><defs><linearGradient id="g1" x1="0" y1="0" x2="0" y2="1"><stop offset="0" stop-color="#c3aa96"/><stop offset="0.5" stop-color="#b09681"/><stop offset="1" stop-color="#927965"/></linearGradient><linearGradient id="s1" x1="0.25" y1="0" x2="0.75" y2="1"><stop offset="0" stop-color="#c3aa96" stop-opacity="0.95"/><stop offset="0.5" stop-color="#b09681" stop-opacity="0.6"/><stop offset="1" stop-color="#b09681" stop-opacity="0"/></linearGradient></defs><path d="M0.4,36 C0.3,33.4 1.3,31.6 3.6,30.9 C8,29.7 14,28.4 19.2,27.2 L20,22 C26,18 40,9.5 51.5,1.8 C53.5,0.3 56.5,0.3 58,2 C61,5.5 66,13 71.7,18.3 C75,21 78,22 82,22.8 C90,24.2 100,25.3 108,26.5 C113,27.3 117,29 118.8,32.5 C119.6,34.5 119.4,38 118.3,40.8 C117.3,44 115.5,46.4 111.5,47.8 L15.5,47.8 C10,46.8 2.6,44 0.7,39 C0.5,38 0.4,37 0.4,36 Z" fill="url(#g1)"/><path d="M0.5,35.5 C6,37.5 40,39.5 70,38.5 C90,37.8 108,35.5 119.3,33.5 C119.6,36 119.2,39 118.3,40.8 C117.3,44 115.5,46.4 111.5,47.8 L15.5,47.8 C11,46.6 4,43.6 0.8,38.3 C0.4,37.3 0.4,36.3 0.5,35.5 Z" fill="#927965" opacity="0.4"/><path d="M15.7,48.6 L18.5,43.2 Q19.0,42.4 19.5,43.2 L22.3,48.6 Z M24.2,48.6 L27.0,43.2 Q27.5,42.4 28.0,43.2 L30.8,48.6 Z M32.7,48.6 L35.5,43.2 Q36.0,42.4 36.5,43.2 L39.3,48.6 Z M41.2,48.6 L44.0,43.2 Q44.5,42.4 45.0,43.2 L47.8,48.6 Z M49.7,48.6 L52.5,43.2 Q53.0,42.4 53.5,43.2 L56.3,48.6 Z M58.2,48.6 L61.0,43.2 Q61.5,42.4 62.0,43.2 L64.8,48.6 Z M66.7,48.6 L69.5,43.2 Q70.0,42.4 70.5,43.2 L73.3,48.6 Z M75.2,48.6 L78.0,43.2 Q78.5,42.4 79.0,43.2 L81.8,48.6 Z M83.7,48.6 L86.5,43.2 Q87.0,42.4 87.5,43.2 L90.3,48.6 Z M92.2,48.6 L95.0,43.2 Q95.5,42.4 96.0,43.2 L98.8,48.6 Z M100.7,48.6 L103.5,43.2 Q104.0,42.4 104.5,43.2 L107.3,48.6 Z " fill="#ffffff"/><path d="M16.9,46.2 L18.5,43.2 Q19.0,42.4 19.5,43.2 L21.1,46.2 Z M25.4,46.2 L27.0,43.2 Q27.5,42.4 28.0,43.2 L29.6,46.2 Z M33.9,46.2 L35.5,43.2 Q36.0,42.4 36.5,43.2 L38.1,46.2 Z M42.4,46.2 L44.0,43.2 Q44.5,42.4 45.0,43.2 L46.6,46.2 Z M50.9,46.2 L52.5,43.2 Q53.0,42.4 53.5,43.2 L55.1,46.2 Z M59.4,46.2 L61.0,43.2 Q61.5,42.4 62.0,43.2 L63.6,46.2 Z M67.9,46.2 L69.5,43.2 Q70.0,42.4 70.5,43.2 L72.1,46.2 Z M76.4,46.2 L78.0,43.2 Q78.5,42.4 79.0,43.2 L80.6,46.2 Z M84.9,46.2 L86.5,43.2 Q87.0,42.4 87.5,43.2 L89.1,46.2 Z M93.4,46.2 L95.0,43.2 Q95.5,42.4 96.0,43.2 L97.6,46.2 Z M101.9,46.2 L103.5,43.2 Q104.0,42.4 104.5,43.2 L106.1,46.2 Z " fill="#5e4a3b" opacity="0.8"/><path d="M20,22 C26,18 40,9.5 51.5,1.8 C53.5,0.3 56.5,0.3 58,2 C61,5.5 66,13 71.7,18.3 C75,21 78,22 82,22.8 C84,28 82,34 78,38 C60,39 40,38.5 24,36 C25,31 23,25.5 20,22 Z" fill="url(#s1)"/><path d="M11,30 C14,28.7 17,27.8 19.2,27.2 L20,22.4 C23,24.4 24.6,28.4 24.2,32.6 C19,32.6 14.5,31.6 11,30 Z" fill="#5e4a3b" opacity="0.55"/><ellipse cx="21" cy="27" rx="2.1" ry="4.3" transform="rotate(-8 21 27)" fill="#5e4a3b" opacity="0.9"/><path d="M74,20.5 C80,22.6 96,24.4 108,26.4 C113,27.2 116.5,28.6 118.3,31.2 C108,30 92,28.8 84,27.6 C80,26.8 76.5,24.5 74,20.5 Z" fill="#c3aa96" opacity="0.45"/><path d="M82,37 C84,34.5 100,34 118.8,31.5" fill="none" stroke="#927965" stroke-width="1.3" opacity="0.7"/></svg>
<svg style="left:404.5px;top:167px;filter:blur(0.35px);" width="118" height="48.6" viewBox="0 0 120 48.4" preserveAspectRatio="none"><defs><linearGradient id="g2" x1="0" y1="0" x2="0" y2="1"><stop offset="0" stop-color="#f3e7cf"/><stop offset="0.5" stop-color="#e9d9bb"/><stop offset="1" stop-color="#d2bf9c"/></linearGradient><linearGradient id="s2" x1="0.25" y1="0" x2="0.75" y2="1"><stop offset="0" stop-color="#f3e7cf" stop-opacity="0.95"/><stop offset="0.5" stop-color="#e9d9bb" stop-opacity="0.6"/><stop offset="1" stop-color="#e9d9bb" stop-opacity="0"/></linearGradient></defs><path d="M0.4,36 C0.3,33.4 1.3,31.6 3.6,30.9 C8,29.7 14,28.4 19.2,27.2 L20,22 C26,18 40,9.5 51.5,1.8 C53.5,0.3 56.5,0.3 58,2 C61,5.5 66,13 71.7,18.3 C75,21 78,22 82,22.8 C90,24.2 100,25.3 108,26.5 C113,27.3 117,29 118.8,32.5 C119.6,34.5 119.4,38 118.3,40.8 C117.3,44 115.5,46.4 111.5,47.8 L15.5,47.8 C10,46.8 2.6,44 0.7,39 C0.5,38 0.4,37 0.4,36 Z" fill="url(#g2)"/><path d="M0.5,35.5 C6,37.5 40,39.5 70,38.5 C90,37.8 108,35.5 119.3,33.5 C119.6,36 119.2,39 118.3,40.8 C117.3,44 115.5,46.4 111.5,47.8 L15.5,47.8 C11,46.6 4,43.6 0.8,38.3 C0.4,37.3 0.4,36.3 0.5,35.5 Z" fill="#d2bf9c" opacity="0.4"/><path d="M15.7,48.6 L18.5,43.2 Q19.0,42.4 19.5,43.2 L22.3,48.6 Z M24.2,48.6 L27.0,43.2 Q27.5,42.4 28.0,43.2 L30.8,48.6 Z M32.7,48.6 L35.5,43.2 Q36.0,42.4 36.5,43.2 L39.3,48.6 Z M41.2,48.6 L44.0,43.2 Q44.5,42.4 45.0,43.2 L47.8,48.6 Z M49.7,48.6 L52.5,43.2 Q53.0,42.4 53.5,43.2 L56.3,48.6 Z M58.2,48.6 L61.0,43.2 Q61.5,42.4 62.0,43.2 L64.8,48.6 Z M66.7,48.6 L69.5,43.2 Q70.0,42.4 70.5,43.2 L73.3,48.6 Z M75.2,48.6 L78.0,43.2 Q78.5,42.4 79.0,43.2 L81.8,48.6 Z M83.7,48.6 L86.5,43.2 Q87.0,42.4 87.5,43.2 L90.3,48.6 Z M92.2,48.6 L95.0,43.2 Q95.5,42.4 96.0,43.2 L98.8,48.6 Z M100.7,48.6 L103.5,43.2 Q104.0,42.4 104.5,43.2 L107.3,48.6 Z " fill="#ffffff"/><path d="M16.9,46.2 L18.5,43.2 Q19.0,42.4 19.5,43.2 L21.1,46.2 Z M25.4,46.2 L27.0,43.2 Q27.5,42.4 28.0,43.2 L29.6,46.2 Z M33.9,46.2 L35.5,43.2 Q36.0,42.4 36.5,43.2 L38.1,46.2 Z M42.4,46.2 L44.0,43.2 Q44.5,42.4 45.0,43.2 L46.6,46.2 Z M50.9,46.2 L52.5,43.2 Q53.0,42.4 53.5,43.2 L55.1,46.2 Z M59.4,46.2 L61.0,43.2 Q61.5,42.4 62.0,43.2 L63.6,46.2 Z M67.9,46.2 L69.5,43.2 Q70.0,42.4 70.5,43.2 L72.1,46.2 Z M76.4,46.2 L78.0,43.2 Q78.5,42.4 79.0,43.2 L80.6,46.2 Z M84.9,46.2 L86.5,43.2 Q87.0,42.4 87.5,43.2 L89.1,46.2 Z M93.4,46.2 L95.0,43.2 Q95.5,42.4 96.0,43.2 L97.6,46.2 Z M101.9,46.2 L103.5,43.2 Q104.0,42.4 104.5,43.2 L106.1,46.2 Z " fill="#a8926c" opacity="0.8"/><path d="M20,22 C26,18 40,9.5 51.5,1.8 C53.5,0.3 56.5,0.3 58,2 C61,5.5 66,13 71.7,18.3 C75,21 78,22 82,22.8 C84,28 82,34 78,38 C60,39 40,38.5 24,36 C25,31 23,25.5 20,22 Z" fill="url(#s2)"/><path d="M11,30 C14,28.7 17,27.8 19.2,27.2 L20,22.4 C23,24.4 24.6,28.4 24.2,32.6 C19,32.6 14.5,31.6 11,30 Z" fill="#a8926c" opacity="0.55"/><ellipse cx="21" cy="27" rx="2.1" ry="4.3" transform="rotate(-8 21 27)" fill="#a8926c" opacity="0.9"/><path d="M74,20.5 C80,22.6 96,24.4 108,26.4 C113,27.2 116.5,28.6 118.3,31.2 C108,30 92,28.8 84,27.6 C80,26.8 76.5,24.5 74,20.5 Z" fill="#f3e7cf" opacity="0.45"/><path d="M82,37 C84,34.5 100,34 118.8,31.5" fill="none" stroke="#d2bf9c" stroke-width="1.3" opacity="0.7"/></svg>
<svg style="left:131px;top:285.7px;filter:blur(0.35px);" width="117.5" height="47.5" viewBox="0 0 120 48.4" preserveAspectRatio="none"><defs><linearGradient id="g3" x1="0" y1="0" x2="0" y2="1"><stop offset="0" stop-color="#cbd4a8"/><stop offset="0.5" stop-color="#b6c090"/><stop offset="1" stop-color="#97a371"/></linearGradient><linearGradient id="s3" x1="0.25" y1="0" x2="0.75" y2="1"><stop offset="0" stop-color="#cbd4a8" stop-opacity="0.95"/><stop offset="0.5" stop-color="#b6c090" stop-opacity="0.6"/><stop offset="1" stop-color="#b6c090" stop-opacity="0"/></linearGradient></defs><path d="M0.4,36 C0.3,33.4 1.3,31.6 3.6,30.9 C8,29.7 14,28.4 19.2,27.2 L20,22 C26,18 40,9.5 51.5,1.8 C53.5,0.3 56.5,0.3 58,2 C61,5.5 66,13 71.7,18.3 C75,21 78,22 82,22.8 C90,24.2 100,25.3 108,26.5 C113,27.3 117,29 118.8,32.5 C119.6,34.5 119.4,38 118.3,40.8 C117.3,44 115.5,46.4 111.5,47.8 L15.5,47.8 C10,46.8 2.6,44 0.7,39 C0.5,38 0.4,37 0.4,36 Z" fill="url(#g3)"/><path d="M0.5,35.5 C6,37.5 40,39.5 70,38.5 C90,37.8 108,35.5 119.3,33.5 C119.6,36 119.2,39 118.3,40.8 C117.3,44 115.5,46.4 111.5,47.8 L15.5,47.8 C11,46.6 4,43.6 0.8,38.3 C0.4,37.3 0.4,36.3 0.5,35.5 Z" fill="#97a371" opacity="0.4"/><path d="M15.7,48.6 L18.5,43.2 Q19.0,42.4 19.5,43.2 L22.3,48.6 Z M24.2,48.6 L27.0,43.2 Q27.5,42.4 28.0,43.2 L30.8,48.6 Z M32.7,48.6 L35.5,43.2 Q36.0,42.4 36.5,43.2 L39.3,48.6 Z M41.2,48.6 L44.0,43.2 Q44.5,42.4 45.0,43.2 L47.8,48.6 Z M49.7,48.6 L52.5,43.2 Q53.0,42.4 53.5,43.2 L56.3,48.6 Z M58.2,48.6 L61.0,43.2 Q61.5,42.4 62.0,43.2 L64.8,48.6 Z M66.7,48.6 L69.5,43.2 Q70.0,42.4 70.5,43.2 L73.3,48.6 Z M75.2,48.6 L78.0,43.2 Q78.5,42.4 79.0,43.2 L81.8,48.6 Z M83.7,48.6 L86.5,43.2 Q87.0,42.4 87.5,43.2 L90.3,48.6 Z M92.2,48.6 L95.0,43.2 Q95.5,42.4 96.0,43.2 L98.8,48.6 Z M100.7,48.6 L103.5,43.2 Q104.0,42.4 104.5,43.2 L107.3,48.6 Z " fill="#ffffff"/><path d="M16.9,46.2 L18.5,43.2 Q19.0,42.4 19.5,43.2 L21.1,46.2 Z M25.4,46.2 L27.0,43.2 Q27.5,42.4 28.0,43.2 L29.6,46.2 Z M33.9,46.2 L35.5,43.2 Q36.0,42.4 36.5,43.2 L38.1,46.2 Z M42.4,46.2 L44.0,43.2 Q44.5,42.4 45.0,43.2 L46.6,46.2 Z M50.9,46.2 L52.5,43.2 Q53.0,42.4 53.5,43.2 L55.1,46.2 Z M59.4,46.2 L61.0,43.2 Q61.5,42.4 62.0,43.2 L63.6,46.2 Z M67.9,46.2 L69.5,43.2 Q70.0,42.4 70.5,43.2 L72.1,46.2 Z M76.4,46.2 L78.0,43.2 Q78.5,42.4 79.0,43.2 L80.6,46.2 Z M84.9,46.2 L86.5,43.2 Q87.0,42.4 87.5,43.2 L89.1,46.2 Z M93.4,46.2 L95.0,43.2 Q95.5,42.4 96.0,43.2 L97.6,46.2 Z M101.9,46.2 L103.5,43.2 Q104.0,42.4 104.5,43.2 L106.1,46.2 Z " fill="#6c7749" opacity="0.8"/><path d="M20,22 C26,18 40,9.5 51.5,1.8 C53.5,0.3 56.5,0.3 58,2 C61,5.5 66,13 71.7,18.3 C75,21 78,22 82,22.8 C84,28 82,34 78,38 C60,39 40,38.5 24,36 C25,31 23,25.5 20,22 Z" fill="url(#s3)"/><path d="M11,30 C14,28.7 17,27.8 19.2,27.2 L20,22.4 C23,24.4 24.6,28.4 24.2,32.6 C19,32.6 14.5,31.6 11,30 Z" fill="#6c7749" opacity="0.55"/><ellipse cx="21" cy="27" rx="2.1" ry="4.3" transform="rotate(-8 21 27)" fill="#6c7749" opacity="0.9"/><path d="M74,20.5 C80,22.6 96,24.4 108,26.4 C113,27.2 116.5,28.6 118.3,31.2 C108,30 92,28.8 84,27.6 C80,26.8 76.5,24.5 74,20.5 Z" fill="#cbd4a8" opacity="0.45"/><path d="M82,37 C84,34.5 100,34 118.8,31.5" fill="none" stroke="#97a371" stroke-width="1.3" opacity="0.7"/></svg>
<svg style="left:266px;top:285.7px;filter:blur(0.35px);" width="117" height="47.5" viewBox="0 0 120 48.4" preserveAspectRatio="none"><defs><linearGradient id="g4" x1="0" y1="0" x2="0" y2="1"><stop offset="0" stop-color="#55555b"/><stop offset="0.5" stop-color="#262629"/><stop offset="1" stop-color="#0e0e10"/></linearGradient><linearGradient id="s4" x1="0.25" y1="0" x2="0.75" y2="1"><stop offset="0" stop-color="#55555b" stop-opacity="0.95"/><stop offset="0.5" stop-color="#262629" stop-opacity="0.6"/><stop offset="1" stop-color="#262629" stop-opacity="0"/></linearGradient></defs><path d="M0.4,36 C0.3,33.4 1.3,31.6 3.6,30.9 C8,29.7 14,28.4 19.2,27.2 L20,22 C26,18 40,9.5 51.5,1.8 C53.5,0.3 56.5,0.3 58,2 C61,5.5 66,13 71.7,18.3 C75,21 78,22 82,22.8 C90,24.2 100,25.3 108,26.5 C113,27.3 117,29 118.8,32.5 C119.6,34.5 119.4,38 118.3,40.8 C117.3,44 115.5,46.4 111.5,47.8 L15.5,47.8 C10,46.8 2.6,44 0.7,39 C0.5,38 0.4,37 0.4,36 Z" fill="url(#g4)"/><path d="M0.5,35.5 C6,37.5 40,39.5 70,38.5 C90,37.8 108,35.5 119.3,33.5 C119.6,36 119.2,39 118.3,40.8 C117.3,44 115.5,46.4 111.5,47.8 L15.5,47.8 C11,46.6 4,43.6 0.8,38.3 C0.4,37.3 0.4,36.3 0.5,35.5 Z" fill="#0e0e10" opacity="0.4"/><path d="M17.6,48.6 L18.5,46.4 Q19.0,45.6 19.5,46.4 L20.4,48.6 Z M26.1,48.6 L27.0,46.4 Q27.5,45.6 28.0,46.4 L28.9,48.6 Z M34.6,48.6 L35.5,46.4 Q36.0,45.6 36.5,46.4 L37.4,48.6 Z M43.1,48.6 L44.0,46.4 Q44.5,45.6 45.0,46.4 L45.9,48.6 Z M51.6,48.6 L52.5,46.4 Q53.0,45.6 53.5,46.4 L54.4,48.6 Z M60.1,48.6 L61.0,46.4 Q61.5,45.6 62.0,46.4 L62.9,48.6 Z M68.6,48.6 L69.5,46.4 Q70.0,45.6 70.5,46.4 L71.4,48.6 Z M77.1,48.6 L78.0,46.4 Q78.5,45.6 79.0,46.4 L79.9,48.6 Z M85.6,48.6 L86.5,46.4 Q87.0,45.6 87.5,46.4 L88.4,48.6 Z M94.1,48.6 L95.0,46.4 Q95.5,45.6 96.0,46.4 L96.9,48.6 Z M102.6,48.6 L103.5,46.4 Q104.0,45.6 104.5,46.4 L105.4,48.6 Z " fill="#ffffff"/><path d="M18.2,47.6 L18.5,46.4 Q19.0,45.6 19.5,46.4 L19.8,47.6 Z M26.7,47.6 L27.0,46.4 Q27.5,45.6 28.0,46.4 L28.3,47.6 Z M35.2,47.6 L35.5,46.4 Q36.0,45.6 36.5,46.4 L36.8,47.6 Z M43.7,47.6 L44.0,46.4 Q44.5,45.6 45.0,46.4 L45.3,47.6 Z M52.2,47.6 L52.5,46.4 Q53.0,45.6 53.5,46.4 L53.8,47.6 Z M60.7,47.6 L61.0,46.4 Q61.5,45.6 62.0,46.4 L62.3,47.6 Z M69.2,47.6 L69.5,46.4 Q70.0,45.6 70.5,46.4 L70.8,47.6 Z M77.7,47.6 L78.0,46.4 Q78.5,45.6 79.0,46.4 L79.3,47.6 Z M86.2,47.6 L86.5,46.4 Q87.0,45.6 87.5,46.4 L87.8,47.6 Z M94.7,47.6 L95.0,46.4 Q95.5,45.6 96.0,46.4 L96.3,47.6 Z M103.2,47.6 L103.5,46.4 Q104.0,45.6 104.5,46.4 L104.8,47.6 Z " fill="#050506" opacity="0.8"/><path d="M20,22 C26,18 40,9.5 51.5,1.8 C53.5,0.3 56.5,0.3 58,2 C61,5.5 66,13 71.7,18.3 C75,21 78,22 82,22.8 C84,28 82,34 78,38 C60,39 40,38.5 24,36 C25,31 23,25.5 20,22 Z" fill="url(#s4)"/><path d="M11,30 C14,28.7 17,27.8 19.2,27.2 L20,22.4 C23,24.4 24.6,28.4 24.2,32.6 C19,32.6 14.5,31.6 11,30 Z" fill="#050506" opacity="0.55"/><ellipse cx="21" cy="27" rx="2.1" ry="4.3" transform="rotate(-8 21 27)" fill="#050506" opacity="0.9"/><path d="M74,20.5 C80,22.6 96,24.4 108,26.4 C113,27.2 116.5,28.6 118.3,31.2 C108,30 92,28.8 84,27.6 C80,26.8 76.5,24.5 74,20.5 Z" fill="#55555b" opacity="0.45"/><path d="M82,37 C84,34.5 100,34 118.8,31.5" fill="none" stroke="#0e0e10" stroke-width="1.3" opacity="0.7"/></svg>
<svg style="left:399px;top:283.2px;filter:blur(0.35px);" width="119" height="47" viewBox="0 0 120 48.4" preserveAspectRatio="none"><defs><linearGradient id="g5" x1="0" y1="0" x2="0" y2="1"><stop offset="0" stop-color="#fefefe"/><stop offset="0.5" stop-color="#f3f4f7"/><stop offset="1" stop-color="#e0e3e8"/></linearGradient><linearGradient id="s5" x1="0.25" y1="0" x2="0.75" y2="1"><stop offset="0" stop-color="#fefefe" stop-opacity="0.95"/><stop offset="0.5" stop-color="#f3f4f7" stop-opacity="0.6"/><stop offset="1" stop-color="#f3f4f7" stop-opacity="0"/></linearGradient></defs><path d="M0.4,36 C0.3,33.4 1.3,31.6 3.6,30.9 C8,29.7 14,28.4 19.2,27.2 L20,22 C26,18 40,9.5 51.5,1.8 C53.5,0.3 56.5,0.3 58,2 C61,5.5 66,13 71.7,18.3 C75,21 78,22 82,22.8 C90,24.2 100,25.3 108,26.5 C113,27.3 117,29 118.8,32.5 C119.6,34.5 119.4,38 118.3,40.8 C117.3,44 115.5,46.4 111.5,47.8 L15.5,47.8 C10,46.8 2.6,44 0.7,39 C0.5,38 0.4,37 0.4,36 Z" fill="url(#g5)"/><path d="M0.5,35.5 C6,37.5 40,39.5 70,38.5 C90,37.8 108,35.5 119.3,33.5 C119.6,36 119.2,39 118.3,40.8 C117.3,44 115.5,46.4 111.5,47.8 L15.5,47.8 C11,46.6 4,43.6 0.8,38.3 C0.4,37.3 0.4,36.3 0.5,35.5 Z" fill="#e0e3e8" opacity="0.4"/><path d="M15.7,48.6 L18.5,43.2 Q19.0,42.4 19.5,43.2 L22.3,48.6 Z M24.2,48.6 L27.0,43.2 Q27.5,42.4 28.0,43.2 L30.8,48.6 Z M32.7,48.6 L35.5,43.2 Q36.0,42.4 36.5,43.2 L39.3,48.6 Z M41.2,48.6 L44.0,43.2 Q44.5,42.4 45.0,43.2 L47.8,48.6 Z M49.7,48.6 L52.5,43.2 Q53.0,42.4 53.5,43.2 L56.3,48.6 Z M58.2,48.6 L61.0,43.2 Q61.5,42.4 62.0,43.2 L64.8,48.6 Z M66.7,48.6 L69.5,43.2 Q70.0,42.4 70.5,43.2 L73.3,48.6 Z M75.2,48.6 L78.0,43.2 Q78.5,42.4 79.0,43.2 L81.8,48.6 Z M83.7,48.6 L86.5,43.2 Q87.0,42.4 87.5,43.2 L90.3,48.6 Z M92.2,48.6 L95.0,43.2 Q95.5,42.4 96.0,43.2 L98.8,48.6 Z M100.7,48.6 L103.5,43.2 Q104.0,42.4 104.5,43.2 L107.3,48.6 Z " fill="#ffffff"/><path d="M16.9,46.2 L18.5,43.2 Q19.0,42.4 19.5,43.2 L21.1,46.2 Z M25.4,46.2 L27.0,43.2 Q27.5,42.4 28.0,43.2 L29.6,46.2 Z M33.9,46.2 L35.5,43.2 Q36.0,42.4 36.5,43.2 L38.1,46.2 Z M42.4,46.2 L44.0,43.2 Q44.5,42.4 45.0,43.2 L46.6,46.2 Z M50.9,46.2 L52.5,43.2 Q53.0,42.4 53.5,43.2 L55.1,46.2 Z M59.4,46.2 L61.0,43.2 Q61.5,42.4 62.0,43.2 L63.6,46.2 Z M67.9,46.2 L69.5,43.2 Q70.0,42.4 70.5,43.2 L72.1,46.2 Z M76.4,46.2 L78.0,43.2 Q78.5,42.4 79.0,43.2 L80.6,46.2 Z M84.9,46.2 L86.5,43.2 Q87.0,42.4 87.5,43.2 L89.1,46.2 Z M93.4,46.2 L95.0,43.2 Q95.5,42.4 96.0,43.2 L97.6,46.2 Z M101.9,46.2 L103.5,43.2 Q104.0,42.4 104.5,43.2 L106.1,46.2 Z " fill="#d2d3d6" opacity="0.8"/><path d="M20,22 C26,18 40,9.5 51.5,1.8 C53.5,0.3 56.5,0.3 58,2 C61,5.5 66,13 71.7,18.3 C75,21 78,22 82,22.8 C84,28 82,34 78,38 C60,39 40,38.5 24,36 C25,31 23,25.5 20,22 Z" fill="url(#s5)"/><path d="M11,30 C14,28.7 17,27.8 19.2,27.2 L20,22.4 C23,24.4 24.6,28.4 24.2,32.6 C19,32.6 14.5,31.6 11,30 Z" fill="#d2d3d6" opacity="0.55"/><ellipse cx="21" cy="27" rx="2.1" ry="4.3" transform="rotate(-8 21 27)" fill="#d2d3d6" opacity="0.9"/><path d="M74,20.5 C80,22.6 96,24.4 108,26.4 C113,27.2 116.5,28.6 118.3,31.2 C108,30 92,28.8 84,27.6 C80,26.8 76.5,24.5 74,20.5 Z" fill="#fefefe" opacity="0.45"/><path d="M82,37 C84,34.5 100,34 118.8,31.5" fill="none" stroke="#e0e3e8" stroke-width="1.3" opacity="0.7"/></svg>
<div style="left:150px;top:232px;height:18px;line-height:18px;font-size:14px;color:#222222;white-space:nowrap;letter-spacing:-0.35px;">COLOR/米黄</div>
<div style="left:290px;top:232px;height:18px;line-height:18px;font-size:14px;color:#222222;white-space:nowrap;letter-spacing:-0.35px;">COLOR/浅棕</div>
<div style="left:424px;top:232px;height:18px;line-height:18px;font-size:14px;color:#222222;white-space:nowrap;letter-spacing:-0.35px;">COLOR/杏色</div>
<div style="left:150px;top:346px;height:18px;line-height:18px;font-size:14px;color:#222222;white-space:nowrap;letter-spacing:-0.35px;">COLOR/果绿</div>
<div style="left:290px;top:346px;height:18px;line-height:18px;font-size:14px;color:#222222;white-space:nowrap;letter-spacing:-0.35px;">COLOR/黑色</div>
<div style="left:424px;top:346px;height:18px;line-height:18px;font-size:14px;color:#222222;white-space:nowrap;letter-spacing:-0.35px;">COLOR/白色</div>
<div style="left:257px;top:74px;width:1px;height:375px;background:#3aa4ac;"></div>
<div style="left:395px;top:74px;width:1px;height:375px;background:#3aa4ac;"></div>
<div style="left:37px;top:260px;width:591px;height:1px;background:#3aa4ac;"></div>
<div style="left:113px;top:137px;width:437px;height:1px;background:#4a6fd8;"></div>
<div style="left:113px;top:137px;width:1px;height:246px;background:#5f86e8;"></div>
<div style="left:549px;top:137px;width:1px;height:246px;background:#4468c8;"></div>
<div style="left:113px;top:382px;width:437px;height:1px;background:#4468c8;"></div>
<div style="left:257px;top:137px;width:1px;height:246px;background:#4db8ff;"></div>
<div style="left:395px;top:137px;width:1px;height:246px;background:#4db8ff;"></div>
<div style="left:113px;top:260px;width:437px;height:1px;background:#9cb6ff;"></div>
<div style="left:113px;top:137px;width:22px;height:8px;background:#0a0aff;"></div>
<div style="left:123.5px;top:137px;width:1px;height:8px;background:#3a3aff;"></div>
<div style="left:114.2px;top:137.5px;height:7.5px;line-height:7.5px;font-size:7px;color:#ffffff;white-space:nowrap;font-weight:bold;letter-spacing:0px;">01</div>
<svg style="left:126px;top:138.5px;" width="7" height="5" viewBox="0 0 7 5"><rect x="0" y="0" width="7" height="5" fill="#fff"/><path d="M1,0.8 L6,4.2 M6,0.8 L1,4.2" stroke="#0a0aff" stroke-width="0.8"/></svg>
<div style="left:257px;top:137px;width:22px;height:8px;background:#0a0aff;"></div>
<div style="left:267.5px;top:137px;width:1px;height:8px;background:#3a3aff;"></div>
<div style="left:258.2px;top:137.5px;height:7.5px;line-height:7.5px;font-size:7px;color:#ffffff;white-space:nowrap;font-weight:bold;letter-spacing:0px;">02</div>
<svg style="left:270px;top:138.5px;" width="7" height="5" viewBox="0 0 7 5"><rect x="0" y="0" width="7" height="5" fill="#fff"/><path d="M1,0.8 L6,4.2 M6,0.8 L1,4.2" stroke="#0a0aff" stroke-width="0.8"/></svg>
<div style="left:395px;top:137px;width:22px;height:8px;background:#0a0aff;"></div>
<div style="left:405.5px;top:137px;width:1px;height:8px;background:#3a3aff;"></div>
<div style="left:396.2px;top:137.5px;height:7.5px;line-height:7.5px;font-size:7px;color:#ffffff;white-space:nowrap;font-weight:bold;letter-spacing:0px;">03</div>
<svg style="left:408px;top:138.5px;" width="7" height="5" viewBox="0 0 7 5"><rect x="0" y="0" width="7" height="5" fill="#fff"/><path d="M1,0.8 L6,4.2 M6,0.8 L1,4.2" stroke="#0a0aff" stroke-width="0.8"/></svg>
<div style="left:113px;top:260px;width:22px;height:8px;background:#0a0aff;"></div>
<div style="left:123.5px;top:260px;width:1px;height:8px;background:#3a3aff;"></div>
<div style="left:114.2px;top:260.5px;height:7.5px;line-height:7.5px;font-size:7px;color:#ffffff;white-space:nowrap;font-weight:bold;letter-spacing:0px;">04</div>
<svg style="left:126px;top:261.5px;" width="7" height="5" viewBox="0 0 7 5"><rect x="0" y="0" width="7" height="5" fill="#fff"/><path d="M1,0.8 L6,4.2 M6,0.8 L1,4.2" stroke="#0a0aff" stroke-width="0.8"/></svg>
<div style="left:257px;top:260px;width:22px;height:8px;background:#0a0aff;"></div>
<div style="left:267.5px;top:260px;width:1px;height:8px;background:#3a3aff;"></div>
<div style="left:258.2px;top:260.5px;height:7.5px;line-height:7.5px;font-size:7px;color:#ffffff;white-space:nowrap;font-weight:bold;letter-spacing:0px;">05</div>
<svg style="left:270px;top:261.5px;" width="7" height="5" viewBox="0 0 7 5"><rect x="0" y="0" width="7" height="5" fill="#fff"/><path d="M1,0.8 L6,4.2 M6,0.8 L1,4.2" stroke="#0a0aff" stroke-width="0.8"/></svg>
<div style="left:395px;top:260px;width:22px;height:8px;background:#0a0aff;"></div>
<div style="left:405.5px;top:260px;width:1px;height:8px;background:#3a3aff;"></div>
<div style="left:396.2px;top:260.5px;height:7.5px;line-height:7.5px;font-size:7px;color:#ffffff;white-space:nowrap;font-weight:bold;letter-spacing:0px;">06</div>
<svg style="left:408px;top:261.5px;" width="7" height="5" viewBox="0 0 7 5"><rect x="0" y="0" width="7" height="5" fill="#fff"/><path d="M1,0.8 L6,4.2 M6,0.8 L1,4.2" stroke="#0a0aff" stroke-width="0.8"/></svg>
<div style="left:24px;top:133px;width:98px;height:54px;background:#535353;border:1px solid #3c3c3c;box-shadow:1px 1px 2px rgba(0,0,0,0.5);"></div>
<div style="left:52.5px;top:134.5px;height:13px;line-height:13px;font-size:8px;color:#dedede;white-space:nowrap;">裁剪工具</div>
<div style="left:111px;top:134.5px;height:13px;line-height:13px;font-size:9px;color:#dedede;white-space:nowrap;">C</div>
<div style="left:52.5px;top:147.0px;height:13px;line-height:13px;font-size:8px;color:#dedede;white-space:nowrap;">透视裁剪工具</div>
<div style="left:111px;top:147.0px;height:13px;line-height:13px;font-size:9px;color:#dedede;white-space:nowrap;">C</div>
<div style="left:52.5px;top:159.5px;height:13px;line-height:13px;font-size:8px;color:#dedede;white-space:nowrap;">切片工具</div>
<div style="left:111px;top:159.5px;height:13px;line-height:13px;font-size:9px;color:#dedede;white-space:nowrap;">C</div>
<div style="left:52.5px;top:172.8px;height:13px;line-height:13px;font-size:8px;color:#dedede;white-space:nowrap;">切片选择工具</div>
<div style="left:111px;top:172.8px;height:13px;line-height:13px;font-size:9px;color:#dedede;white-space:nowrap;">C</div>
<svg style="left:37px;top:135.5px;" width="11" height="10" viewBox="0 0 11 10"><path d="M2.6,0.3 V7.4 H10.8 M0.2,2.4 H8.4 V9.8" fill="none" stroke="#dadada" stroke-width="1"/></svg>
<svg style="left:38px;top:148px;" width="10" height="10" viewBox="0 0 10 10"><path d="M1.2,0.3 L2,9.7 M8.8,0.3 L8,9.7 M0.3,1.5 H9.7 M0.6,8.6 H9.4" fill="none" stroke="#dadada" stroke-width="0.9"/><path d="M3.8,1.5 L4.1,8.6 M6.2,1.5 L5.9,8.6 M1.6,3.8 H8.4 M1.8,6.2 H8.2" stroke="#9a9a9a" stroke-width="0.6"/></svg>
<svg style="left:37px;top:162px;" width="13" height="9" viewBox="0 0 13 9"><path d="M0.6,8.5 L7,2 L9.2,4.6 Z" fill="#f0f0f0"/><path d="M5.6,0.9 L12.4,0.3 L9.3,4.2 Z" fill="#a4a4a4"/></svg>
<svg style="left:37px;top:175.8px;" width="13" height="9" viewBox="0 0 13 9"><path d="M0.6,8.5 L7,2 L9.2,4.6 Z" fill="#f0f0f0"/><path d="M5.6,0.9 L12.4,0.3 L9.3,4.2 Z" fill="#a4a4a4"/><path d="M0,0 L3,2.4 L0,4.8 Z" fill="#dadada"/></svg>
<div style="left:27px;top:163.5px;width:3px;height:3px;background:#f0f0f0;"></div>
<svg style="left:18px;top:157px;" width="120" height="18" viewBox="0 0 120 18"><rect x="2" y="2.5" width="115.05" height="12.75" fill="none" stroke="#f00a0a" stroke-width="2"/></svg>
<div style="left:0px;top:133px;width:30px;height:17px;border:2px solid #f00a0a;"></div>
<div style="left:641px;top:42px;width:224px;height:8px;background:#454545;"></div>
<div style="left:641px;top:42px;width:26px;height:8px;background:#3e3e3e;"></div>
<div style="left:839px;top:42px;width:26px;height:8px;background:#3e3e3e;"></div>
<svg style="left:657.8px;top:44.4px;" width="4.6" height="3.6" viewBox="0 0 5.5 4.4"><path d="M2.5,0.2 L0,2.2 L2.5,4.2 Z M5.5,0.2 L3,2.2 L5.5,4.2 Z" fill="#bdbdbd"/></svg>
<svg style="left:829.5px;top:44.4px;" width="4.6" height="3.6" viewBox="0 0 5.5 4.4"><path d="M0,0.2 L2.5,2.2 L0,4.2 Z M3,0.2 L5.5,2.2 L3,4.2 Z" fill="#bdbdbd"/></svg>
<svg style="left:856.5px;top:44.4px;" width="4.6" height="3.6" viewBox="0 0 5.5 4.4"><path d="M2.5,0.2 L0,2.2 L2.5,4.2 Z M5.5,0.2 L3,2.2 L5.5,4.2 Z" fill="#bdbdbd"/></svg>
<div style="left:641px;top:50px;width:26px;height:410px;background:#535353;"></div>
<div style="left:667px;top:50px;width:2px;height:410px;background:#383838;"></div>
<div style="left:648px;top:53px;width:12px;height:2px;background:#4b4b4b;"></div>
<svg style="left:649.8px;top:59.5px;" width="14" height="14" viewBox="0 0 14 14"><text x="0" y="11.3" font-size="11.5" fill="#dadada">A</text><rect x="9" y="1.5" width="1" height="11.5" fill="#dadada"/></svg>
<svg style="left:649px;top:80.5px;" width="11" height="11" viewBox="0 0 11 11"><path d="M5,0.7 H10.5 M6,0.7 V10.5 M8.8,0.7 V10.5" stroke="#dadada" stroke-width="1.5" fill="none"/><path d="M6,0 A3.1,3.1 0 0 0 6,6.2 Z" fill="#dadada" stroke="#dadada" stroke-width="0.6"/></svg>
<svg style="left:648px;top:97px;" width="13" height="14" viewBox="0 0 13 14"><rect x="0.5" y="0.5" width="3" height="3" fill="none" stroke="#dadada" stroke-width="0.8"/><rect x="0.5" y="5" width="3" height="3" fill="none" stroke="#dadada" stroke-width="0.8"/><rect x="0.3" y="9.5" width="3.6" height="3.6" fill="#dadada"/><path d="M6.5,3.5 C10,2 12,6 10.5,9.5 C9.8,11 8.5,12 7,12.5" fill="none" stroke="#dadada" stroke-width="1.5"/><path d="M5,3.8 L8.6,1 L8.8,5.4 Z" fill="#dadada"/></svg>
<div style="left:641px;top:115px;width:26px;height:1px;background:#404040;"></div>
<div style="left:648px;top:119px;width:12px;height:2px;background:#4b4b4b;"></div>
<svg style="left:648px;top:125px;" width="15" height="14" viewBox="0 0 15 14"><path d="M14.3,0.8 C11.5,2.6 9,5.2 7.6,7 L9.6,9 C11.6,7.4 13.7,4 14.3,0.8 Z" fill="#dadada"/><path d="M6.9,7.7 L8.9,9.7 C8.3,12 6,13.2 3.2,12.8 C5,11.8 4.9,9.1 6.9,7.7 Z" fill="#dadada"/><rect x="0.5" y="1" width="1.6" height="1.6" fill="#dadada"/><rect x="3.3" y="1" width="1.6" height="1.6" fill="#dadada"/><rect x="0.5" y="3.8" width="1.6" height="1.6" fill="#dadada"/><rect x="3.3" y="3.8" width="1.6" height="1.6" fill="#dadada"/><rect x="0.5" y="6.6" width="1.6" height="1.6" fill="#dadada"/></svg>
<div style="left:641px;top:143px;width:26px;height:1px;background:#404040;"></div>
<div style="left:648px;top:147px;width:12px;height:2px;background:#4b4b4b;"></div>
<svg style="left:649px;top:154px;" width="13" height="13" viewBox="0 0 13 13"><path d="M2,2 L11,11" stroke="#dadada" stroke-width="1.3"/><path d="M11,2 L2.5,10.5" stroke="#dadada" stroke-width="2.2" stroke-linecap="round"/><circle cx="2.2" cy="2.2" r="1.8" fill="none" stroke="#dadada" stroke-width="1"/><circle cx="11" cy="11" r="1.6" fill="none" stroke="#dadada" stroke-width="1"/></svg>
<div style="left:641px;top:171px;width:26px;height:1px;background:#404040;"></div>
<div style="left:669px;top:50px;width:168px;height:410px;background:#4d4d4d;"></div>
<div style="left:669px;top:50px;width:169px;height:19px;background:#424242;"></div>
<div style="left:669px;top:50px;width:30px;height:19px;background:#484848;"></div>
<div style="left:668.3px;top:50.7px;height:19px;line-height:19px;font-size:8px;color:#a8a8a8;white-space:nowrap;width:30px;text-align:center;">属性</div>
<div style="left:699px;top:50px;width:30px;height:19px;background:#535353;"></div>
<div style="left:698.5px;top:50.7px;height:19px;line-height:19px;font-size:8px;color:#e8e8e8;white-space:nowrap;width:30px;text-align:center;">图层</div>
<svg style="left:827px;top:57px;" width="7" height="5" viewBox="0 0 7 5"><rect x="0" y="0" width="7" height="5" fill="#7e7e7e"/><rect x="0" y="0" width="7" height="1" fill="#959595"/><rect x="0" y="2" width="7" height="1" fill="#959595"/><rect x="0" y="4" width="7" height="1" fill="#959595"/></svg>
<div style="left:669px;top:69px;width:169px;height:22px;background:#535353;"></div>
<div style="left:671px;top:76px;width:58px;height:12px;background:#434343;border-radius:2px;"></div>
<svg style="left:676px;top:78px;" width="8" height="8" viewBox="0 0 8 8"><circle cx="4.8" cy="3.2" r="2.4" fill="none" stroke="#e0e0e0" stroke-width="1"/><path d="M3,5 L0.6,7.4" stroke="#e0e0e0" stroke-width="1.1"/></svg>
<div style="left:686px;top:76px;height:12px;line-height:12px;font-size:8px;color:#e0e0e0;white-space:nowrap;">类型</div>
<svg style="left:721.5px;top:81px;" width="5" height="4" viewBox="0 0 5 4"><path d="M0.5,0.5 L2.5,2.8 L4.5,0.5" fill="none" stroke="#c8c8c8" stroke-width="0.9"/></svg>
<svg style="left:740px;top:78px;" width="10" height="8" viewBox="0 0 10 8"><rect x="0.5" y="0.5" width="9" height="7" fill="none" stroke="#dadada" stroke-width="1"/><path d="M2,6 L4,3.5 L5.5,5 L6.8,4 L8,6 Z" fill="#dadada"/></svg>
<svg style="left:756px;top:77px;" width="9" height="9" viewBox="0 0 9 9"><circle cx="4.5" cy="4.5" r="3.9" fill="none" stroke="#dadada" stroke-width="1"/><path d="M1.7,7.3 A3.9,3.9 0 0 1 7.3,1.7 Z" fill="#dadada"/></svg>
<svg style="left:773px;top:77px;" width="8" height="9" viewBox="0 0 8 9"><path d="M0.3,0.5 H7.7 V2.8 H6.9 C6.8,1.8 6.5,1.6 5.6,1.6 H5 V7.3 C5,7.8 5.3,8 6.2,8 V8.7 H1.8 V8 C2.7,8 3,7.8 3,7.3 V1.6 H2.4 C1.5,1.6 1.2,1.8 1.1,2.8 H0.3 Z" fill="#dadada"/></svg>
<svg style="left:789px;top:77px;" width="9" height="9" viewBox="0 0 9 9"><rect x="1.5" y="1.5" width="6" height="6" fill="none" stroke="#dadada" stroke-width="1"/><rect x="0" y="0" width="2.4" height="2.4" fill="#dadada"/><rect x="6.6" y="0" width="2.4" height="2.4" fill="#dadada"/><rect x="0" y="6.6" width="2.4" height="2.4" fill="#dadada"/><rect x="6.6" y="6.6" width="2.4" height="2.4" fill="#dadada"/></svg>
<svg style="left:806px;top:77px;" width="9" height="9" viewBox="0 0 9 9"><path d="M3,0.5 H6.5 L8.5,2.5 V8.5 H3 Z" fill="none" stroke="#dadada" stroke-width="0.9"/><rect x="0.3" y="4.5" width="4.6" height="4" fill="#dadada"/><path d="M1.3,4.5 V3.4 A1.3,1.3 0 0 1 3.9,3.4 V4.5" fill="none" stroke="#dadada" stroke-width="0.8"/></svg>
<div style="left:825px;top:75px;width:6px;height:13px;background:#3e3e3e;border-radius:3px;"></div>
<div style="left:825px;top:74.5px;width:6px;height:6px;background:#e6e6e6;border-radius:3px;"></div>
<div style="left:669px;top:91px;width:169px;height:1px;background:#444444;"></div>
<div style="left:669px;top:92px;width:169px;height:17px;background:#535353;"></div>
<div style="left:671px;top:95px;width:78px;height:12px;background:#4e4e4e;border:1px solid #494949;border-radius:2px;"></div>
<div style="left:677px;top:95px;height:12px;line-height:12px;font-size:8px;color:#7c7c7c;white-space:nowrap;">正常</div>
<svg style="left:741px;top:99px;" width="5" height="4" viewBox="0 0 5 4"><path d="M0.5,0.5 L2.5,2.8 L4.5,0.5" fill="none" stroke="#6c6c6c" stroke-width="0.9"/></svg>
<div style="left:756px;top:95px;height:12px;line-height:12px;font-size:8px;color:#7c7c7c;white-space:nowrap;letter-spacing:0px;">不透明度:</div>
<div style="left:794px;top:95px;width:27px;height:12px;background:#4e4e4e;border:1px solid #494949;border-radius:2px 0 0 2px;"></div>
<div style="left:797px;top:95px;height:12px;line-height:12px;font-size:8px;color:#747474;white-space:nowrap;letter-spacing:-0.3px;">100%</div>
<div style="left:822px;top:95px;width:11px;height:12px;background:#4e4e4e;border:1px solid #494949;border-radius:0 2px 2px 0;"></div>
<svg style="left:825px;top:99px;" width="5" height="4" viewBox="0 0 5 4"><path d="M0.5,0.5 L2.5,2.8 L4.5,0.5" fill="none" stroke="#6c6c6c" stroke-width="0.9"/></svg>
<div style="left:669px;top:109px;width:169px;height:1px;background:#444444;"></div>
<div style="left:669px;top:110px;width:169px;height:19px;background:#535353;"></div>
<div style="left:672.5px;top:112px;height:14px;line-height:14px;font-size:8px;color:#d8d8d8;white-space:nowrap;">锁定:</div>
<svg style="left:698px;top:116px;" width="8" height="8" viewBox="0 0 8 8"><rect x="0.4" y="0.4" width="7.2" height="7.2" fill="none" stroke="#b0b0b0" stroke-width="0.8"/><rect x="1.4" y="1.4" width="2" height="2" fill="#c8c8c8"/><rect x="4.6" y="1.4" width="2" height="2" fill="#c8c8c8"/><rect x="3" y="3" width="2" height="2" fill="#c8c8c8"/><rect x="1.4" y="4.6" width="2" height="2" fill="#c8c8c8"/><rect x="4.6" y="4.6" width="2" height="2" fill="#c8c8c8"/></svg>
<svg style="left:713px;top:114px;" width="10" height="11" viewBox="0 0 10 11"><path d="M9.8,0.3 C7.5,1.8 5.2,4.2 4,5.8 L5.7,7.5 C7.4,6 9.3,3 9.8,0.3 Z" fill="#b0b0b0"/><path d="M3.4,6.4 L5.1,8.1 C4.6,9.9 2.6,10.8 0.5,10.4 C2,9.5 1.9,7.4 3.4,6.4 Z" fill="#b0b0b0"/></svg>
<svg style="left:727px;top:115px;" width="10" height="10" viewBox="0 0 10 10"><path d="M5,1 V9 M1,5 H9" stroke="#b8b8b8" stroke-width="0.9"/><path d="M5,0 L6.8,2.2 H3.2 Z M5,10 L6.8,7.8 H3.2 Z M0,5 L2.2,3.2 V6.8 Z M10,5 L7.8,3.2 V6.8 Z" fill="#b8b8b8"/></svg>
<svg style="left:742px;top:115px;" width="10" height="10" viewBox="0 0 10 10"><path d="M2.5,0.5 V7.5 H9.5 M0.5,2.5 H7.5 V9.5" fill="none" stroke="#b8b8b8" stroke-width="0.9"/><path d="M6,2 L9,0.5 L8.5,3.5" fill="none" stroke="#b8b8b8" stroke-width="0.7"/></svg>
<div style="left:755px;top:112px;width:13px;height:15px;background:#383838;"></div>
<svg style="left:758px;top:115px;" width="7" height="9" viewBox="0 0 7 9"><rect x="0.3" y="3.8" width="6.4" height="5" rx="0.6" fill="#ececec"/><path d="M1.6,3.8 V2.6 A1.9,1.9 0 0 1 5.4,2.6 V3.8" fill="none" stroke="#ececec" stroke-width="1"/><rect x="3" y="5.5" width="1" height="1.8" fill="#555"/></svg>
<div style="left:772px;top:112px;height:14px;line-height:14px;font-size:8px;color:#7c7c7c;white-space:nowrap;">填充:</div>
<div style="left:794px;top:113px;width:27px;height:12px;background:#4e4e4e;border:1px solid #494949;border-radius:2px 0 0 2px;"></div>
<div style="left:797px;top:113px;height:12px;line-height:12px;font-size:8px;color:#747474;white-space:nowrap;letter-spacing:-0.3px;">100%</div>
<div style="left:822px;top:113px;width:11px;height:12px;background:#4e4e4e;border:1px solid #494949;border-radius:0 2px 2px 0;"></div>
<svg style="left:825px;top:117px;" width="5" height="4" viewBox="0 0 5 4"><path d="M0.5,0.5 L2.5,2.8 L4.5,0.5" fill="none" stroke="#6c6c6c" stroke-width="0.9"/></svg>
<div style="left:669px;top:129px;width:169px;height:1px;background:#444444;"></div>
<div style="left:669px;top:130px;width:158px;height:19px;background:#6a6a6a;"></div>
<svg style="left:674px;top:136px;" width="10" height="7" viewBox="0 0 10 7"><path d="M0.3,3.5 C2,0.8 8,0.8 9.7,3.5 C8,6.2 2,6.2 0.3,3.5 Z" fill="#f0f0f0"/><circle cx="5" cy="3.5" r="1.7" fill="#6a6a6a"/><circle cx="5" cy="3.5" r="0.8" fill="#f0f0f0"/></svg>
<svg style="left:689px;top:130.6px;" width="26" height="18" viewBox="0 0 26 18"><rect x="1.2" y="1.6" width="23.4" height="14.8" fill="#3c3c3c"/><rect x="2.9" y="3.1" width="20.4" height="12" fill="#ffffff"/><path d="M0.5,4 V0.7 H4.5 M21,0.7 H25.3 V4 M25.3,14 V17.3 H21 M4.5,17.3 H0.5 V14" fill="none" stroke="#c4c4c4" stroke-width="1"/><path d="M4.6,7.0 L6.7,5.2 L7.8,6.2 L9.6,6.4 L9.6,7.4 L4.6,7.6 Z" fill="#cfc5a0"/><path d="M10.8,7.0 L12.9,5.2 L14.0,6.2 L15.8,6.4 L15.8,7.4 L10.8,7.6 Z" fill="#a58a78"/><path d="M17.0,7.0 L19.1,5.2 L20.2,6.2 L22.0,6.4 L22.0,7.4 L17.0,7.6 Z" fill="#dccdae"/><path d="M4.6,12.2 L6.7,10.4 L7.8,11.4 L9.6,11.6 L9.6,12.6 L4.6,12.8 Z" fill="#a9b07f"/><path d="M10.8,12.2 L12.9,10.4 L14.0,11.4 L15.8,11.6 L15.8,12.6 L10.8,12.8 Z" fill="#2a2a2c"/><path d="M17.0,12.2 L19.1,10.4 L20.2,11.4 L22.0,11.6 L22.0,12.6 L17.0,12.8 Z" fill="#e2e5ea"/></svg>
<div style="left:720px;top:134px;height:14px;line-height:14px;font-size:8px;color:#ececec;white-space:nowrap;">图层 1</div>
<svg style="left:809px;top:135.5px;" width="7" height="9" viewBox="0 0 7 9"><rect x="0.3" y="3.8" width="6.4" height="5" rx="0.6" fill="#ececec"/><path d="M1.6,3.8 V2.6 A1.9,1.9 0 0 1 5.4,2.6 V3.8" fill="none" stroke="#ececec" stroke-width="1"/><rect x="3" y="5.5" width="1" height="1.8" fill="#555"/></svg>
<div style="left:827px;top:130px;width:10px;height:313px;background:#4a4a4a;"></div>
<div style="left:669px;top:443px;width:169px;height:1px;background:#3e3e3e;"></div>
<div style="left:669px;top:444px;width:169px;height:16px;background:#535353;"></div>
<svg style="left:699px;top:447.8px;" width="11" height="8" viewBox="0 0 11 8"><rect x="0.5" y="1.5" width="5.5" height="4.5" rx="2.2" fill="none" stroke="#b4b4b4" stroke-width="1"/><rect x="4.5" y="1.5" width="5.5" height="4.5" rx="2.2" fill="none" stroke="#b4b4b4" stroke-width="1"/></svg>
<svg style="left:719px;top:446px;" width="11" height="11" viewBox="0 0 11 11"><text x="0" y="8.5" font-size="9.5" font-style="italic" fill="#b4b4b4" font-family="Liberation Serif,serif">fx</text><rect x="9" y="9" width="1.2" height="1.2" fill="#b4b4b4"/></svg>
<svg style="left:737px;top:447.6px;" width="10" height="8" viewBox="0 0 10 8"><rect x="0" y="0" width="10" height="7.5" fill="#b4b4b4"/><circle cx="5" cy="3.7" r="2.3" fill="#535353"/></svg>
<svg style="left:756px;top:446.8px;" width="11" height="11" viewBox="0 0 11 11"><circle cx="4.5" cy="4.8" r="3.9" fill="none" stroke="#e0e0e0" stroke-width="1"/><path d="M1.7,7.6 A3.9,3.9 0 0 1 7.3,2 Z" fill="#e0e0e0"/><path d="M7.5,9 H10.5 L9,10.5 Z" fill="#e0e0e0"/></svg>
<svg style="left:774px;top:447.8px;" width="9" height="8" viewBox="0 0 9 8"><path d="M0,0.5 H3.5 L4.5,1.8 H9 V7.5 H0 Z" fill="#e0e0e0"/></svg>
<svg style="left:792.5px;top:447.4px;" width="8" height="8" viewBox="0 0 9 9"><path d="M0.5,0.5 H8.5 V8.5 H3.5 L0.5,5.5 Z" fill="none" stroke="#e0e0e0" stroke-width="1"/><path d="M0.5,5.5 H3.5 V8.5 Z" fill="#e0e0e0"/><path d="M0.5,0.5 H8.5 V8.5 H3.5 V5.5 H0.5 Z" fill="#e0e0e0" opacity="0.25"/></svg>
<svg style="left:810px;top:446.8px;" width="8" height="10" viewBox="0 0 8 10"><path d="M0,1.8 H8 M3,1.8 V0.5 H5 V1.8" fill="none" stroke="#8a8a8a" stroke-width="1"/><path d="M0.8,3 H7.2 L6.6,9.5 H1.4 Z" fill="#8a8a8a"/></svg>
<div style="left:837px;top:50px;width:2px;height:410px;background:#383838;"></div>
<div style="left:839px;top:50px;width:26px;height:410px;background:#535353;"></div>
<div style="left:847px;top:53px;width:12px;height:2px;background:#4b4b4b;"></div>
<svg style="left:846px;top:62px;" width="14" height="9.5" viewBox="0 0 15 11"><path d="M7.5,0.5 C12,0.5 14.5,3 14.5,5.5 C14.5,8 12.5,8.2 11,8 C9.8,7.8 9.3,8.6 9.6,9.4 C9.9,10.3 9,10.8 7.5,10.8 C3,10.8 0.5,8.2 0.5,5.6 C0.5,2.8 3.5,0.5 7.5,0.5 Z" fill="#ececec"/><circle cx="4" cy="4" r="1.1" fill="#535353"/><circle cx="7.5" cy="2.8" r="1.1" fill="#535353"/><circle cx="11" cy="4" r="1.1" fill="#535353"/><circle cx="4" cy="7.3" r="1.1" fill="#535353"/></svg>
<svg style="left:847px;top:80px;" width="12" height="12" viewBox="0 0 12 12"><rect x="0" y="0" width="12" height="12" fill="#dcdcdc"/><rect x="1.2" y="1.2" width="2.4" height="2.4" fill="#535353"/><rect x="1.2" y="4.8" width="2.4" height="2.4" fill="#535353"/><rect x="1.2" y="8.4" width="2.4" height="2.4" fill="#535353"/><rect x="4.8" y="1.2" width="2.4" height="2.4" fill="#535353"/><rect x="4.8" y="4.8" width="2.4" height="2.4" fill="#535353"/><rect x="4.8" y="8.4" width="2.4" height="2.4" fill="#535353"/><rect x="8.4" y="1.2" width="2.4" height="2.4" fill="#535353"/><rect x="8.4" y="4.8" width="2.4" height="2.4" fill="#535353"/><rect x="8.4" y="8.4" width="2.4" height="2.4" fill="#535353"/></svg>
<div style="left:840px;top:96px;width:25px;height:1px;background:#404040;"></div>
<div style="left:847px;top:100px;width:12px;height:2px;background:#4b4b4b;"></div>
<svg style="left:847px;top:107px;" width="12" height="12" viewBox="0 0 12 12"><path d="M0.6,2.5 V11.4 H9.5" fill="none" stroke="#ececec" stroke-width="1.1"/><rect x="2.6" y="0.6" width="8.8" height="8.8" fill="none" stroke="#ececec" stroke-width="1.2"/><path d="M6.5,0.6 H10 V6 L8.2,4.6 L6.5,6 Z" fill="#ececec"/></svg>
<svg style="left:848px;top:127px;" width="11" height="11" viewBox="0 0 11 11"><circle cx="5.5" cy="5.5" r="4.8" fill="none" stroke="#ececec" stroke-width="1.2"/><path d="M2.1,8.9 A4.8,4.8 0 0 1 8.9,2.1 Z" fill="#ececec"/></svg>
<svg style="left:847px;top:145px;" width="13" height="12" viewBox="0 0 13 12"><circle cx="6.5" cy="4" r="3.6" fill="#b0b0b0" stroke="#ececec" stroke-width="0.8"/><circle cx="4" cy="8" r="3.6" fill="#d8d8d8" stroke="#ececec" stroke-width="0.8" opacity="0.9"/><circle cx="9" cy="8" r="3.6" fill="#ececec" stroke="#ececec" stroke-width="0.8" opacity="0.85"/></svg>
<svg style="left:846px;top:164px;" width="14" height="12" viewBox="0 0 14 12"><path d="M2,11 C2,4 5,2 7,2 C9,2 12,4 12,11" fill="none" stroke="#ececec" stroke-width="1"/><path d="M1,2 H13" stroke="#ececec" stroke-width="0.8"/><rect x="5.7" y="0.7" width="2.6" height="2.6" fill="#ececec"/><circle cx="1" cy="2" r="1" fill="#ececec"/><circle cx="13" cy="2" r="1" fill="#ececec"/><rect x="0.8" y="9.6" width="2.4" height="2.4" fill="#535353" stroke="#ececec" stroke-width="0.7"/><rect x="10.8" y="9.6" width="2.4" height="2.4" fill="#535353" stroke="#ececec" stroke-width="0.7"/></svg>
<svg style="left:847px;top:184px;" width="12" height="12" viewBox="0 0 12 12"><rect x="4" y="0" width="8" height="8" fill="#ececec"/><text x="0" y="10.5" font-size="10" font-style="italic" fill="#ececec" font-family="Liberation Serif,serif" stroke="#535353" stroke-width="0.3">fx</text></svg>
<div style="left:840px;top:199px;width:25px;height:1px;background:#404040;"></div>
</div></body></html>
